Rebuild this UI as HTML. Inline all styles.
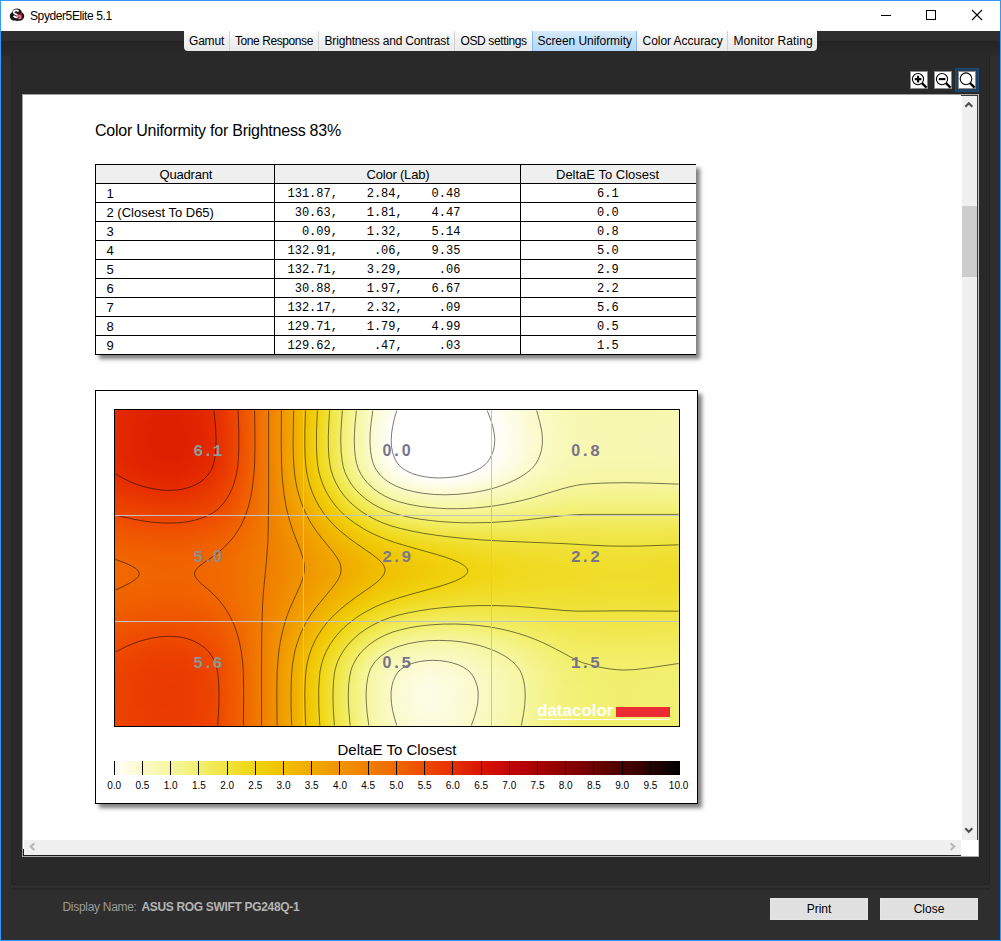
<!DOCTYPE html>
<html><head><meta charset="utf-8"><title>Spyder5Elite 5.1</title>
<style>
html,body{margin:0;padding:0}
body{width:1001px;height:941px;overflow:hidden;background:#2e2e2e;position:relative;font-family:"Liberation Sans",sans-serif;font-size:12px;color:#000}
div,span,i,svg{position:absolute;box-sizing:border-box}
.t{white-space:pre;line-height:1}
#titlebar{left:0;top:0;width:1001px;height:31px;background:#fff}
#title{left:30px;top:10px;font-size:12px;letter-spacing:-.4px}
#strip{left:1px;top:41px;width:999px;height:15px;background:linear-gradient(#252525,#2a2a2a);border-radius:4px;box-shadow:0 0 1px #1f1f1f}
#panel{left:11px;top:55px;width:979px;height:830px;background:#292929;border-left:1px solid #242424;border-right:1px solid #242424;border-bottom:1px solid #242424;border-radius:0 0 4px 4px}
#sep{left:12px;top:888px;width:978px;height:2px;background:#262626}
#tabs{left:184px;top:31px;width:633px;height:20px;background:linear-gradient(#ffffff,#f1f1f1 45%,#e9e9e9);border-radius:0 0 4px 4px;overflow:hidden}
#tabs .s{top:0;width:1px;height:20px;background:#d2d2d2}
#tabs .t{top:4px;font-size:12px}
#seltab{left:348px;top:0;width:105px;height:20px;background:linear-gradient(#d6eafc,#c2e0fb 50%,#b3d8fa);border-left:1px solid #86bdf0;border-right:1px solid #86bdf0}
.zb{top:71px;width:18px;height:18px;background:#fff;border:1px solid #8a8a8a}
#content{left:22px;top:94px;width:957px;height:763px;background:#fff}
#vs{left:962px;top:96px;width:15px;height:744px;background:#f0f0f0}
#vthumb{left:962px;top:206px;width:15px;height:71px;background:#cdcdcd}
#hs{left:24px;top:840px;width:937px;height:15px;background:#f0f0f0}
h1{position:absolute;margin:0;left:95px;top:122px;font-size:16px;font-weight:400;letter-spacing:-.24px;line-height:18px;white-space:pre}
#tbl{left:95px;top:164px;width:601px;height:191px;background:#fff;box-shadow:3.5px 4px 4px rgba(0,0,0,.5)}
#tbl .h{left:0;width:601px;height:1px;background:#000}
#tbl .v{top:0;width:1px;height:191px;background:#000}
#tbl .hd{left:0;top:1px;width:601px;height:18px;background:#efefef}
#tbl .t{font-size:13px}
#tbl .m{font-family:"Liberation Mono",monospace;font-size:12px}
#chart{left:95px;top:390px;width:603px;height:414px;background:#fff;border:1px solid #000;box-shadow:3.5px 4px 4px rgba(0,0,0,.5)}
#heat{left:114px;top:409px;width:566px;height:318px;border:1px solid #000;background:#f0c000;overflow:hidden}
#heat i{position:static;display:block;height:2px;width:564px}
#heat svg{left:0;top:0}
.lb{font-family:"Liberation Mono",monospace;font-weight:700;font-size:16px;white-space:pre;line-height:16px;width:60px;text-align:center}
.lb b{display:inline-block;width:9.6px;text-align:center;font-weight:700}
.lb .z{font-family:"Liberation Sans",sans-serif;font-size:15.5px}
#bar{left:114px;top:761px;width:566px;height:14px;background:linear-gradient(90deg,#ffffff,#fafac8,#f6f6a0,#f2ef6c,#f0e33c,#f0d410,#f0c000,#f0aa00,#f09400,#f07e00,#f06600,#ee4a00,#e62e00,#d81400,#c40400,#a80000,#8c0000,#6c0000,#4c0000,#280000,#000000)}
.tk{top:761px;width:1px;height:14px;background:#000}
.tl{top:781px;width:40px;text-align:center;font-size:10px;line-height:10px;white-space:pre}
.btn{top:898px;width:98px;height:22px;background:#e1e1e1;border:1px solid #e4e4e4;text-align:center;line-height:20px;font-size:12px}
</style></head><body>
<div id="titlebar"></div>
<svg style="left:9px;top:8px" width="16" height="14" viewBox="0 0 16 14"><path d="M3.2 4.2C3.6 1.6 6 .6 8 .6s4.4 1 4.8 3.6c1.6.7 2.6 2.3 2.4 4.2-.2 2.3-1.8 3.8-3.6 4.2-1.2.5-5.8.5-7.2 0C2.6 12.2 1 10.7.8 8.4.6 6.5 1.6 4.900 3.2 4.2z" fill="#1a1a1a"/><path d="M9.6 3.4C9 2.6 8.2 2.3 7.3 2.3c-1.5 0-2.6.8-2.6 2 0 2.6 4.4 1.6 4.4 3.6 0 .9-.8 1.4-1.8 1.4-1.1 0-2-.5-2.6-1.5" fill="none" stroke="#fff" stroke-width="1.7"/><rect x="8.6" y="5.6" width="4.6" height="5.6" rx=".8" fill="#b01020"/><text x="9.3" y="10.5" font-family="Liberation Sans" font-weight="700" font-size="5.5" fill="#e8c0c0">5</text></svg>
<span id="title" class="t">Spyder5Elite 5.1</span>
<svg style="left:875px;top:5px" width="115" height="22" viewBox="875 5 115 22" shape-rendering="crispEdges"><path d="M881 15.5h10M926.5 10.5h9v9h-9z" fill="none" stroke="#000" stroke-width="1"/><path d="M972 10l10 10M982 10l-10 10" fill="none" stroke="#000" stroke-width="1.1" shape-rendering="geometricPrecision"/></svg>
<div id="strip"></div>
<div id="panel"></div>
<div id="sep"></div>
<div id="tabs">
<div id="seltab"></div>
<div class="s" style="left:45px"></div><div class="s" style="left:134px"></div><div class="s" style="left:270px"></div><div class="s" style="left:543px"></div>
<span class="t" style="left:5px;letter-spacing:-.2px">Gamut</span>
<span class="t" style="left:51px;letter-spacing:-.42px">Tone Response</span>
<span class="t" style="left:140.5px;letter-spacing:-.17px">Brightness and Contrast</span>
<span class="t" style="left:276.5px;letter-spacing:-.38px">OSD settings</span>
<span class="t" style="left:353.5px;letter-spacing:-.06px">Screen Uniformity</span>
<span class="t" style="left:458.5px;letter-spacing:-.04px">Color Accuracy</span>
<span class="t" style="left:549.5px;letter-spacing:.08px">Monitor Rating</span>
</div>
<div class="zb" style="left:910px"></div><div class="zb" style="left:934px"></div>
<div style="left:955px;top:68px;width:24px;height:24px;background:#21405e;border:1px solid #1c4b7a"></div>
<div class="zb" style="left:958px"></div>
<svg style="left:910px;top:71px" width="66" height="18" viewBox="0 0 66 18" fill="none" stroke="#000"><circle cx="8" cy="8.1" r="5.6" stroke-width="1.1"/><path d="M12 12.1l4.5 4.5" stroke-width="2.3"/><path d="M4.8 8.1h6.6M8.1 4.8v6.6" stroke-width="2.1"/><g transform="translate(24,0)"><circle cx="8" cy="8.1" r="5.6" stroke-width="1.1"/><path d="M12 12.1l4.5 4.5" stroke-width="2.3"/><path d="M4.8 8.1h6.6" stroke-width="2.1"/></g><g transform="translate(48,0)"><circle cx="8" cy="7.7" r="5.8" stroke-width="1.1"/><path d="M12.1 12.1l4.5 4.5" stroke-width="2.3"/></g></svg>
<div id="content"></div>
<div style="left:22px;top:94px;width:957px;height:1px;background:#a0a0a0"></div>
<div style="left:22px;top:94px;width:1px;height:763px;background:#a0a0a0"></div>
<div style="left:961px;top:95px;width:17px;height:1px;background:#3c3c3c"></div><div style="left:978px;top:94px;width:1px;height:763px;background:#c4c4c4"></div>
<div style="left:977px;top:95px;width:1px;height:745px;background:#3c3c3c"></div>
<div style="left:23px;top:855px;width:938px;height:1px;background:#1c1c1c"></div><div style="left:23px;top:849px;width:1px;height:7px;background:#1c1c1c"></div>
<div style="left:22px;top:856px;width:957px;height:1px;background:#a8a8a8"></div>
<div id="vs"></div><div id="vthumb"></div><div id="hs"></div>
<svg style="left:962px;top:95px" width="15" height="745" viewBox="0 0 15 745" fill="none" stroke="#505050" stroke-width="2.1"><path d="M3.3 11.8l3.5-3.6 3.5 3.6M3.3 733.2l3.5 3.6 3.5-3.6"/></svg>
<svg style="left:23px;top:840px" width="938" height="15" viewBox="0 0 938 15" fill="none" stroke="#b9b9b9" stroke-width="2.2"><path d="M11.3 3.2l-3.6 3.4 3.6 3.4M927.7 3.2l3.6 3.4-3.6 3.4"/></svg>
<h1>Color Uniformity for Brightness 83%</h1>
<div id="tbl">
<div class="hd"></div>
<div class="h" style="top:0px"></div>
<div class="h" style="top:19px"></div>
<div class="h" style="top:38px"></div>
<div class="h" style="top:57px"></div>
<div class="h" style="top:76px"></div>
<div class="h" style="top:95px"></div>
<div class="h" style="top:114px"></div>
<div class="h" style="top:133px"></div>
<div class="h" style="top:152px"></div>
<div class="h" style="top:171px"></div>
<div class="h" style="top:190px"></div>
<div class="v" style="left:0px"></div>
<div class="v" style="left:179px"></div>
<div class="v" style="left:425px"></div>
<span class="t" style="left:64.5px;top:4px;letter-spacing:-.2px">Quadrant</span>
<span class="t" style="left:271.5px;top:4px;letter-spacing:-.2px">Color (Lab)</span>
<span class="t" style="left:461px;top:4px">DeltaE To Closest</span>
<span class="t" style="left:11.5px;top:23px">1</span>
<span class="t m" style="left:192.5px;top:24px">131.87,    2.84,    0.48</span>
<span class="t m" style="left:502px;top:24px">6.1</span>
<span class="t" style="left:11.5px;top:42px">2 (Closest To D65)</span>
<span class="t m" style="left:192.5px;top:43px"> 30.63,    1.81,    4.47</span>
<span class="t m" style="left:502px;top:43px">0.0</span>
<span class="t" style="left:11.5px;top:61px">3</span>
<span class="t m" style="left:192.5px;top:62px">  0.09,    1.32,    5.14</span>
<span class="t m" style="left:502px;top:62px">0.8</span>
<span class="t" style="left:11.5px;top:80px">4</span>
<span class="t m" style="left:192.5px;top:81px">132.91,     .06,    9.35</span>
<span class="t m" style="left:502px;top:81px">5.0</span>
<span class="t" style="left:11.5px;top:99px">5</span>
<span class="t m" style="left:192.5px;top:100px">132.71,    3.29,     .06</span>
<span class="t m" style="left:502px;top:100px">2.9</span>
<span class="t" style="left:11.5px;top:118px">6</span>
<span class="t m" style="left:192.5px;top:119px"> 30.88,    1.97,    6.67</span>
<span class="t m" style="left:502px;top:119px">2.2</span>
<span class="t" style="left:11.5px;top:137px">7</span>
<span class="t m" style="left:192.5px;top:138px">132.17,    2.32,     .09</span>
<span class="t m" style="left:502px;top:138px">5.6</span>
<span class="t" style="left:11.5px;top:156px">8</span>
<span class="t m" style="left:192.5px;top:157px">129.71,    1.79,    4.99</span>
<span class="t m" style="left:502px;top:157px">0.5</span>
<span class="t" style="left:11.5px;top:175px">9</span>
<span class="t m" style="left:192.5px;top:176px">129.62,     .47,     .03</span>
<span class="t m" style="left:502px;top:176px">1.5</span>
</div>
<div id="chart"></div>
<div id="heat">
<i style="background:linear-gradient(90deg,#e42b00,#e22700,#e12500,#e02200,#df2100,#df2100,#e02200,#e22600,#e52c00,#e83600,#ed4500,#ef5800,#f06d00,#f08200,#f09700,#f0ad00,#f0c302,#f0d616,#f0e442,#f2ef6f,#f6f59b,#f9f9bb,#fcfcda,#fefef5,#ffffff,#ffffff,#ffffff,#ffffff,#ffffff,#ffffff,#ffffff,#ffffff,#fefef3,#fdfde5,#fbfbd7,#fafaca,#f9f9c1,#f9f9b9,#f8f8b4,#f8f8b0,#f8f8af,#f7f7ae,#f7f7ae,#f7f7ae,#f7f7ae,#f7f7af,#f8f8b0,#f8f8b0)"></i>
<i style="background:linear-gradient(90deg,#e42b00,#e22700,#e12400,#e02200,#df2100,#df2100,#e02200,#e22600,#e52c00,#e83600,#ed4500,#ef5800,#f06d00,#f08200,#f09700,#f0ad00,#f0c302,#f0d616,#f0e542,#f2ef6f,#f6f59c,#f9f9bc,#fcfcda,#fefef6,#ffffff,#ffffff,#ffffff,#ffffff,#ffffff,#ffffff,#ffffff,#ffffff,#fefef3,#fdfde6,#fbfbd8,#fafacb,#f9f9c1,#f9f9ba,#f8f8b4,#f8f8b1,#f8f8b0,#f7f7af,#f7f7ae,#f7f7ae,#f7f7af,#f8f8af,#f8f8b0,#f8f8b1)"></i>
<i style="background:linear-gradient(90deg,#e42a00,#e22700,#e12400,#df2200,#df2000,#df2000,#e02200,#e22600,#e52c00,#e83600,#ed4500,#ef5800,#f06d00,#f08200,#f09700,#f0ad00,#f0c302,#f0d617,#f0e543,#f2f070,#f6f69d,#f9f9bc,#fcfcdb,#fefef7,#ffffff,#ffffff,#ffffff,#ffffff,#ffffff,#ffffff,#ffffff,#ffffff,#fefef4,#fdfde6,#fcfcd9,#fafacb,#f9f9c1,#f9f9ba,#f8f8b4,#f8f8b1,#f8f8b0,#f8f8af,#f7f7af,#f7f7af,#f8f8af,#f8f8b0,#f8f8b0,#f8f8b1)"></i>
<i style="background:linear-gradient(90deg,#e42a00,#e22700,#e12400,#df2200,#df2000,#df2000,#df2200,#e12500,#e52b00,#e83600,#ed4500,#ef5800,#f06d00,#f08200,#f09700,#f0ad00,#f0c302,#f0d617,#f0e543,#f2f071,#f6f69e,#f9f9bd,#fcfcdc,#fefef8,#ffffff,#ffffff,#ffffff,#ffffff,#ffffff,#ffffff,#ffffff,#ffffff,#fefef5,#fdfde7,#fcfcd9,#fafacc,#f9f9c2,#f9f9ba,#f8f8b5,#f8f8b1,#f8f8b0,#f8f8af,#f8f8af,#f8f8af,#f8f8af,#f8f8b0,#f8f8b1,#f8f8b1)"></i>
<i style="background:linear-gradient(90deg,#e42a00,#e22700,#e02400,#df2100,#df2000,#de2000,#df2200,#e12500,#e52b00,#e83600,#ed4500,#ef5800,#f06d00,#f08200,#f09700,#f0ad00,#f0c302,#f0d717,#f0e544,#f2f071,#f6f69e,#f9f9bd,#fcfcdd,#fefef9,#ffffff,#ffffff,#ffffff,#ffffff,#ffffff,#ffffff,#ffffff,#ffffff,#fefef6,#fdfde8,#fcfcda,#fafacc,#f9f9c2,#f9f9bb,#f8f8b5,#f8f8b2,#f8f8b1,#f8f8b0,#f8f8af,#f8f8af,#f8f8b0,#f8f8b0,#f8f8b1,#f8f8b2)"></i>
<i style="background:linear-gradient(90deg,#e42a00,#e22700,#e02400,#df2100,#de2000,#de2000,#df2200,#e12500,#e42b00,#e83600,#ed4500,#ef5800,#f06d00,#f08200,#f09700,#f0ad00,#f0c303,#f0d718,#f0e544,#f2f072,#f6f69f,#f9f9be,#fcfcde,#fffffa,#ffffff,#ffffff,#ffffff,#ffffff,#ffffff,#ffffff,#ffffff,#ffffff,#fefef6,#fdfde8,#fcfcda,#fafacd,#f9f9c3,#f9f9bb,#f8f8b5,#f8f8b2,#f8f8b1,#f8f8b0,#f8f8b0,#f8f8b0,#f8f8b0,#f8f8b1,#f8f8b1,#f8f8b2)"></i>
<i style="background:linear-gradient(90deg,#e42a00,#e22600,#e02300,#df2100,#de2000,#de2000,#df2100,#e12500,#e42b00,#e83500,#ec4500,#ef5800,#f06d00,#f08200,#f09700,#f0ad00,#f0c303,#f0d718,#f0e545,#f2f072,#f6f6a0,#f9f9bf,#fcfcdf,#fffffb,#ffffff,#ffffff,#ffffff,#ffffff,#ffffff,#ffffff,#ffffff,#ffffff,#fefef7,#fdfde9,#fcfcdb,#fafacd,#f9f9c3,#f9f9bb,#f8f8b6,#f8f8b2,#f8f8b1,#f8f8b0,#f8f8b0,#f8f8b0,#f8f8b0,#f8f8b1,#f8f8b1,#f8f8b2)"></i>
<i style="background:linear-gradient(90deg,#e42a00,#e22600,#e02300,#df2100,#de2000,#de2000,#df2100,#e12500,#e42b00,#e83500,#ec4500,#ef5800,#f06d00,#f08200,#f09700,#f0ad00,#f0c303,#f0d718,#f0e545,#f3f073,#f6f6a0,#f9f9bf,#fcfce0,#fffffb,#ffffff,#ffffff,#ffffff,#ffffff,#ffffff,#ffffff,#ffffff,#ffffff,#fefef8,#fdfdea,#fcfcdc,#fbfbce,#fafac3,#f9f9bc,#f8f8b6,#f8f8b3,#f8f8b1,#f8f8b1,#f8f8b0,#f8f8b0,#f8f8b1,#f8f8b1,#f8f8b2,#f8f8b2)"></i>
<i style="background:linear-gradient(90deg,#e42a00,#e22600,#e02300,#df2100,#de1f00,#de1f00,#df2100,#e12500,#e42b00,#e83500,#ec4400,#ef5800,#f06d00,#f08200,#f09700,#f0ad00,#f0c303,#f0d719,#f0e545,#f3f073,#f6f6a1,#f9f9bf,#fcfce0,#fffffc,#ffffff,#ffffff,#ffffff,#ffffff,#ffffff,#ffffff,#ffffff,#ffffff,#fefef8,#fdfdea,#fcfcdc,#fbfbce,#fafac4,#f9f9bc,#f8f8b6,#f8f8b3,#f8f8b2,#f8f8b1,#f8f8b1,#f8f8b1,#f8f8b1,#f8f8b1,#f8f8b2,#f8f8b3)"></i>
<i style="background:linear-gradient(90deg,#e42900,#e22600,#e02300,#df2100,#de1f00,#de1f00,#df2100,#e12500,#e42b00,#e83500,#ec4400,#ef5800,#f06d00,#f08200,#f09700,#f0ad00,#f0c403,#f0d719,#f0e546,#f3f074,#f6f6a1,#f9f9c0,#fcfce1,#fffffd,#ffffff,#ffffff,#ffffff,#ffffff,#ffffff,#ffffff,#ffffff,#ffffff,#fefef9,#fdfdeb,#fcfcdc,#fbfbcf,#fafac4,#f9f9bc,#f8f8b7,#f8f8b3,#f8f8b2,#f8f8b1,#f8f8b1,#f8f8b1,#f8f8b1,#f8f8b2,#f8f8b2,#f8f8b3)"></i>
<i style="background:linear-gradient(90deg,#e32900,#e22600,#e02300,#df2100,#de1f00,#de1f00,#df2100,#e12400,#e42a00,#e83500,#ec4400,#ef5800,#f06d00,#f08200,#f09700,#f0ad00,#f0c403,#f0d719,#f0e546,#f3f074,#f6f6a1,#f9f9c0,#fcfce1,#fffffd,#ffffff,#ffffff,#ffffff,#ffffff,#ffffff,#ffffff,#ffffff,#ffffff,#fefef9,#fdfdeb,#fcfcdd,#fbfbcf,#fafac4,#f9f9bc,#f8f8b7,#f8f8b3,#f8f8b2,#f8f8b1,#f8f8b1,#f8f8b1,#f8f8b1,#f8f8b2,#f8f8b2,#f8f8b3)"></i>
<i style="background:linear-gradient(90deg,#e32900,#e22600,#e02300,#df2000,#de1f00,#de1f00,#df2100,#e12400,#e42a00,#e83500,#ec4400,#ef5700,#f06d00,#f08200,#f09700,#f0ad00,#f0c403,#f0d719,#f0e646,#f3f074,#f6f6a1,#f9f9c1,#fcfce2,#fffffe,#ffffff,#ffffff,#ffffff,#ffffff,#ffffff,#ffffff,#ffffff,#ffffff,#fffffa,#fdfdeb,#fcfcdd,#fbfbcf,#fafac4,#f9f9bd,#f8f8b7,#f8f8b4,#f8f8b2,#f8f8b2,#f8f8b1,#f8f8b1,#f8f8b1,#f8f8b2,#f8f8b3,#f8f8b3)"></i>
<i style="background:linear-gradient(90deg,#e32900,#e22600,#e02300,#df2000,#de1f00,#de1f00,#df2100,#e12400,#e42a00,#e83500,#ec4400,#ef5700,#f06d00,#f08200,#f09700,#f0ad00,#f0c403,#f0d719,#f0e646,#f3f075,#f6f6a2,#f9f9c1,#fcfce2,#fffffe,#ffffff,#ffffff,#ffffff,#ffffff,#ffffff,#ffffff,#ffffff,#ffffff,#fffffa,#fdfdec,#fcfcdd,#fbfbd0,#fafac4,#f9f9bd,#f8f8b7,#f8f8b4,#f8f8b2,#f8f8b2,#f8f8b1,#f8f8b1,#f8f8b2,#f8f8b2,#f8f8b3,#f8f8b3)"></i>
<i style="background:linear-gradient(90deg,#e32900,#e22600,#e02300,#df2000,#de1f00,#de1f00,#df2100,#e12400,#e42a00,#e83500,#ec4400,#ef5700,#f06d00,#f08200,#f09700,#f0ad00,#f0c403,#f0d71a,#f0e647,#f3f075,#f6f6a2,#f9f9c1,#fcfce2,#fffffe,#ffffff,#ffffff,#ffffff,#ffffff,#ffffff,#ffffff,#ffffff,#ffffff,#fffffa,#fdfdec,#fcfcde,#fbfbd0,#fafac5,#f9f9bd,#f8f8b7,#f8f8b4,#f8f8b3,#f8f8b2,#f8f8b1,#f8f8b1,#f8f8b2,#f8f8b2,#f8f8b3,#f8f8b4)"></i>
<i style="background:linear-gradient(90deg,#e32900,#e22600,#e02300,#df2000,#de1f00,#de1f00,#df2100,#e12400,#e42a00,#e83500,#ec4400,#ef5700,#f06d00,#f08200,#f09700,#f0ad00,#f0c403,#f0d71a,#f0e647,#f3f075,#f6f6a2,#f9f9c1,#fcfce3,#ffffff,#ffffff,#ffffff,#ffffff,#ffffff,#ffffff,#ffffff,#ffffff,#ffffff,#fffffa,#fdfdec,#fcfcde,#fbfbd0,#fafac5,#f9f9bd,#f8f8b7,#f8f8b4,#f8f8b3,#f8f8b2,#f8f8b1,#f8f8b1,#f8f8b2,#f8f8b2,#f8f8b3,#f8f8b4)"></i>
<i style="background:linear-gradient(90deg,#e32900,#e22600,#e02300,#df2000,#de1f00,#de1f00,#df2100,#e12400,#e42a00,#e83500,#ec4400,#ef5700,#f06d00,#f08200,#f09700,#f0ad00,#f0c403,#f0d71a,#f0e647,#f3f075,#f6f6a2,#f9f9c1,#fcfce3,#ffffff,#ffffff,#ffffff,#ffffff,#ffffff,#ffffff,#ffffff,#ffffff,#ffffff,#fffffa,#fdfdec,#fcfcde,#fbfbd0,#fafac5,#f9f9bd,#f8f8b7,#f8f8b4,#f8f8b3,#f8f8b2,#f8f8b1,#f8f8b1,#f8f8b2,#f8f8b2,#f8f8b3,#f8f8b4)"></i>
<i style="background:linear-gradient(90deg,#e32900,#e22600,#e02300,#df2000,#de1f00,#de1f00,#df2100,#e12400,#e42a00,#e83500,#ec4400,#ef5700,#f06d00,#f08200,#f09700,#f0ad00,#f0c403,#f0d71a,#f0e647,#f3f075,#f6f6a2,#f9f9c1,#fcfce2,#ffffff,#ffffff,#ffffff,#ffffff,#ffffff,#ffffff,#ffffff,#ffffff,#ffffff,#fffffa,#fdfdec,#fcfcde,#fbfbd0,#fafac5,#f9f9bd,#f8f8b7,#f8f8b4,#f8f8b3,#f8f8b2,#f8f8b1,#f8f8b1,#f8f8b2,#f8f8b2,#f8f8b3,#f8f8b4)"></i>
<i style="background:linear-gradient(90deg,#e32900,#e22600,#e02300,#df2000,#de1f00,#de1f00,#df2100,#e12400,#e42a00,#e83500,#ec4400,#ef5700,#f06d00,#f08200,#f09700,#f0ad00,#f0c403,#f0d71a,#f0e646,#f3f075,#f6f6a2,#f9f9c1,#fcfce2,#fffffe,#ffffff,#ffffff,#ffffff,#ffffff,#ffffff,#ffffff,#ffffff,#ffffff,#fffffa,#fdfdec,#fcfcdd,#fbfbd0,#fafac5,#f9f9bd,#f8f8b7,#f8f8b4,#f8f8b2,#f8f8b2,#f8f8b1,#f8f8b1,#f8f8b2,#f8f8b2,#f8f8b3,#f8f8b3)"></i>
<i style="background:linear-gradient(90deg,#e32900,#e22600,#e02300,#df2000,#de1f00,#de1f00,#df2100,#e12400,#e42a00,#e83500,#ec4400,#ef5700,#f06d00,#f08200,#f09700,#f0ad00,#f0c403,#f0d719,#f0e646,#f3f074,#f6f6a2,#f9f9c1,#fcfce2,#fffffe,#ffffff,#ffffff,#ffffff,#ffffff,#ffffff,#ffffff,#ffffff,#ffffff,#fffffa,#fdfdeb,#fcfcdd,#fbfbcf,#fafac4,#f9f9bd,#f8f8b7,#f8f8b4,#f8f8b2,#f8f8b2,#f8f8b1,#f8f8b1,#f8f8b1,#f8f8b2,#f8f8b3,#f8f8b3)"></i>
<i style="background:linear-gradient(90deg,#e32900,#e22600,#e02300,#df2100,#de1f00,#de1f00,#df2100,#e12400,#e42a00,#e83500,#ec4400,#ef5800,#f06d00,#f08200,#f09700,#f0ad00,#f0c403,#f0d719,#f0e546,#f3f074,#f6f6a1,#f9f9c0,#fcfce1,#fffffd,#ffffff,#ffffff,#ffffff,#ffffff,#ffffff,#ffffff,#ffffff,#ffffff,#fefef9,#fdfdeb,#fcfcdd,#fbfbcf,#fafac4,#f9f9bc,#f8f8b7,#f8f8b3,#f8f8b2,#f8f8b1,#f8f8b1,#f8f8b1,#f8f8b1,#f8f8b2,#f8f8b2,#f8f8b3)"></i>
<i style="background:linear-gradient(90deg,#e42900,#e22600,#e02300,#df2100,#de1f00,#de1f00,#df2100,#e12500,#e42b00,#e83500,#ec4400,#ef5800,#f06d00,#f08200,#f09700,#f0ad00,#f0c403,#f0d719,#f0e546,#f3f074,#f6f6a1,#f9f9c0,#fcfce1,#fffffd,#ffffff,#ffffff,#ffffff,#ffffff,#ffffff,#ffffff,#ffffff,#ffffff,#fefef9,#fdfdeb,#fcfcdc,#fbfbcf,#fafac4,#f9f9bc,#f8f8b6,#f8f8b3,#f8f8b2,#f8f8b1,#f8f8b1,#f8f8b1,#f8f8b1,#f8f8b2,#f8f8b2,#f8f8b3)"></i>
<i style="background:linear-gradient(90deg,#e42a00,#e22600,#e02300,#df2100,#de2000,#de2000,#df2100,#e12500,#e42b00,#e83500,#ec4500,#ef5800,#f06d00,#f08200,#f09700,#f0ad00,#f0c303,#f0d719,#f0e545,#f3f073,#f6f6a0,#f9f9bf,#fcfce0,#fffffc,#ffffff,#ffffff,#ffffff,#ffffff,#ffffff,#ffffff,#ffffff,#ffffff,#fefef8,#fdfdea,#fcfcdc,#fbfbce,#fafac3,#f9f9bc,#f8f8b6,#f8f8b3,#f8f8b2,#f8f8b1,#f8f8b0,#f8f8b0,#f8f8b1,#f8f8b1,#f8f8b2,#f8f8b3)"></i>
<i style="background:linear-gradient(90deg,#e42a00,#e22600,#e02300,#df2100,#de2000,#de2000,#df2100,#e12500,#e42b00,#e83500,#ec4500,#ef5800,#f06d00,#f08200,#f09700,#f0ad00,#f0c303,#f0d718,#f0e545,#f2f072,#f6f6a0,#f9f9bf,#fcfcdf,#fffffb,#ffffff,#ffffff,#ffffff,#ffffff,#ffffff,#ffffff,#ffffff,#ffffff,#fefef7,#fdfde9,#fcfcdb,#fafacd,#f9f9c3,#f9f9bb,#f8f8b6,#f8f8b2,#f8f8b1,#f8f8b0,#f8f8b0,#f8f8b0,#f8f8b0,#f8f8b1,#f8f8b1,#f8f8b2)"></i>
<i style="background:linear-gradient(90deg,#e42a00,#e22700,#e02400,#df2100,#de2000,#de2000,#df2200,#e12500,#e52b00,#e83600,#ed4500,#ef5800,#f06d00,#f08200,#f09700,#f0ad00,#f0c302,#f0d718,#f0e544,#f2f071,#f6f69f,#f9f9be,#fcfcde,#fefef9,#ffffff,#ffffff,#ffffff,#ffffff,#ffffff,#ffffff,#ffffff,#ffffff,#fefef6,#fdfde8,#fcfcda,#fafacd,#f9f9c2,#f9f9bb,#f8f8b5,#f8f8b2,#f8f8b1,#f8f8b0,#f8f8b0,#f8f8b0,#f8f8b0,#f8f8b0,#f8f8b1,#f8f8b2)"></i>
<i style="background:linear-gradient(90deg,#e42a00,#e22700,#e12400,#df2200,#df2000,#df2000,#df2200,#e12600,#e52b00,#e83600,#ed4500,#ef5800,#f06d00,#f08200,#f09700,#f0ad00,#f0c302,#f0d617,#f0e543,#f2f070,#f6f69d,#f9f9bd,#fcfcdc,#fefef8,#ffffff,#ffffff,#ffffff,#ffffff,#ffffff,#ffffff,#ffffff,#ffffff,#fefef5,#fdfde7,#fcfcd9,#fafacc,#f9f9c2,#f9f9ba,#f8f8b5,#f8f8b1,#f8f8b0,#f8f8af,#f8f8af,#f8f8af,#f8f8af,#f8f8b0,#f8f8b0,#f8f8b1)"></i>
<i style="background:linear-gradient(90deg,#e42b00,#e22700,#e12400,#e02200,#df2100,#df2100,#e02200,#e22600,#e52c00,#e83600,#ed4500,#ef5800,#f06d00,#f08200,#f09700,#f0ad00,#f0c302,#f0d616,#f0e542,#f2ef6f,#f6f59c,#f9f9bc,#fcfcdb,#fefef6,#ffffff,#ffffff,#ffffff,#ffffff,#ffffff,#ffffff,#ffffff,#ffffff,#fefef3,#fdfde6,#fbfbd8,#fafacb,#f9f9c1,#f9f9ba,#f8f8b4,#f8f8b1,#f8f8b0,#f7f7af,#f7f7af,#f7f7af,#f7f7af,#f8f8af,#f8f8b0,#f8f8b1)"></i>
<i style="background:linear-gradient(90deg,#e42b00,#e32800,#e12500,#e02200,#df2100,#df2100,#e02300,#e22600,#e52c00,#e83700,#ed4600,#ef5800,#f06d00,#f08200,#f09700,#f0ac00,#f0c202,#f0d616,#f0e441,#f2ef6e,#f6f59b,#f9f9ba,#fcfcd9,#fefef4,#ffffff,#ffffff,#ffffff,#ffffff,#ffffff,#ffffff,#ffffff,#ffffff,#fefef2,#fdfde4,#fbfbd7,#fafac9,#f9f9c0,#f8f8b9,#f8f8b3,#f8f8b0,#f7f7af,#f7f7ae,#f7f7ae,#f7f7ae,#f7f7ae,#f7f7af,#f8f8af,#f8f8b0)"></i>
<i style="background:linear-gradient(90deg,#e52b00,#e32800,#e12500,#e02300,#df2200,#df2100,#e02300,#e22700,#e52d00,#e93700,#ed4600,#ef5900,#f06d00,#f08200,#f09700,#f0ac00,#f0c202,#f0d615,#f0e440,#f2ef6d,#f5f599,#f8f8b9,#fbfbd7,#fefef2,#ffffff,#ffffff,#ffffff,#ffffff,#ffffff,#ffffff,#ffffff,#fffffd,#fefef0,#fcfce3,#fbfbd5,#fafac8,#f9f9bf,#f8f8b8,#f8f8b2,#f8f8af,#f7f7ae,#f7f7ad,#f7f7ad,#f7f7ad,#f7f7ad,#f7f7ae,#f7f7ae,#f8f8af)"></i>
<i style="background:linear-gradient(90deg,#e52c00,#e32900,#e22600,#e02300,#e02200,#e02200,#e02400,#e22700,#e52d00,#e93700,#ed4600,#ef5900,#f06d00,#f08200,#f09600,#f0ac00,#f0c201,#f0d514,#f0e43f,#f2ef6b,#f5f597,#f8f8b7,#fbfbd4,#fefeef,#ffffff,#ffffff,#ffffff,#ffffff,#ffffff,#ffffff,#ffffff,#fffffa,#fdfdee,#fcfce1,#fbfbd3,#fafac7,#f9f9be,#f8f8b7,#f8f8b1,#f7f7ae,#f7f7ad,#f7f7ac,#f7f7ac,#f7f7ac,#f7f7ac,#f7f7ad,#f7f7ad,#f7f7ae)"></i>
<i style="background:linear-gradient(90deg,#e52c00,#e32900,#e22600,#e12400,#e02300,#e02300,#e12400,#e32800,#e62e00,#e93800,#ed4700,#ef5900,#f06e00,#f08200,#f09600,#f0ac00,#f0c101,#f0d512,#f0e33d,#f2ee69,#f5f494,#f8f8b5,#fbfbd1,#fdfdec,#fffffe,#ffffff,#ffffff,#ffffff,#ffffff,#ffffff,#ffffff,#fefef8,#fdfdeb,#fcfcde,#fbfbd1,#fafac5,#f9f9bd,#f8f8b6,#f8f8b0,#f7f7ad,#f7f7ac,#f7f7ab,#f7f7ab,#f7f7ab,#f7f7ab,#f7f7ac,#f7f7ac,#f7f7ad)"></i>
<i style="background:linear-gradient(90deg,#e62d00,#e42a00,#e22700,#e12500,#e02300,#e02300,#e12500,#e32800,#e62e00,#e93900,#ed4700,#ef5a00,#f06e00,#f08200,#f09600,#f0ab00,#f0c101,#f0d411,#f0e33b,#f2ee67,#f5f492,#f8f8b3,#fafacd,#fdfde8,#fffffb,#ffffff,#ffffff,#ffffff,#ffffff,#ffffff,#ffffff,#fefef4,#fdfde8,#fcfcdc,#fbfbce,#fafac4,#f9f9bb,#f8f8b4,#f7f7af,#f7f7ac,#f7f7ab,#f7f7aa,#f7f7aa,#f7f7aa,#f7f7aa,#f7f7aa,#f7f7ab,#f7f7ac)"></i>
<i style="background:linear-gradient(90deg,#e62e00,#e42b00,#e32800,#e12600,#e12400,#e12400,#e22600,#e32900,#e62f00,#e93900,#ed4800,#ef5a00,#f06e00,#f08200,#f09600,#f0ab00,#f0c000,#f0d410,#f0e239,#f2ed64,#f5f48e,#f8f8b0,#fafac9,#fdfde4,#fefef6,#ffffff,#ffffff,#ffffff,#ffffff,#ffffff,#fffffb,#fefef1,#fdfde5,#fcfcd9,#fafacc,#f9f9c2,#f9f9b9,#f8f8b3,#f7f7ad,#f7f7aa,#f7f7a9,#f7f7a9,#f7f7a8,#f7f7a8,#f7f7a9,#f7f7a9,#f7f7aa,#f7f7aa)"></i>
<i style="background:linear-gradient(90deg,#e62f00,#e52b00,#e32900,#e22600,#e12500,#e12500,#e22700,#e42a00,#e73000,#e93a00,#ee4800,#ef5a00,#f06e00,#f08200,#f09600,#f0aa00,#f0c000,#f0d30f,#f0e137,#f2ec61,#f4f38b,#f7f7ad,#fafac6,#fcfcdf,#fefef2,#fffffe,#ffffff,#ffffff,#ffffff,#ffffff,#fefef7,#fdfded,#fcfce2,#fbfbd5,#fafac9,#f9f9c0,#f8f8b8,#f8f8b1,#f7f7ac,#f7f7a9,#f7f7a8,#f7f7a7,#f7f7a7,#f7f7a7,#f7f7a7,#f7f7a8,#f7f7a8,#f7f7a9)"></i>
<i style="background:linear-gradient(90deg,#e63000,#e52c00,#e42a00,#e22700,#e22600,#e22600,#e32800,#e42b00,#e73100,#ea3b00,#ee4900,#ef5b00,#f06e00,#f08200,#f09500,#f0aa00,#f0bf00,#f0d20e,#f0e035,#f1ec5e,#f4f387,#f7f7aa,#f9f9c2,#fcfcdb,#fdfded,#fefef9,#ffffff,#ffffff,#ffffff,#fffffb,#fefef3,#fdfde9,#fcfcde,#fbfbd2,#fafac6,#f9f9bd,#f8f8b6,#f7f7af,#f7f7aa,#f7f7a7,#f7f7a6,#f7f7a6,#f7f7a5,#f7f7a5,#f7f7a6,#f7f7a6,#f7f7a6,#f7f7a7)"></i>
<i style="background:linear-gradient(90deg,#e73100,#e62d00,#e42b00,#e32800,#e22700,#e22700,#e32900,#e52c00,#e73200,#ea3c00,#ee4a00,#ef5b00,#f06e00,#f08200,#f09500,#f0a900,#f0be00,#f0d10e,#f0e032,#f1eb5b,#f4f283,#f7f7a7,#f9f9bf,#fbfbd5,#fdfde7,#fefef3,#fffffa,#fffffc,#fffffb,#fefef6,#fdfdee,#fdfde5,#fcfcda,#fbfbce,#fafac3,#f9f9bb,#f8f8b3,#f7f7ad,#f7f7a8,#f7f7a5,#f6f6a4,#f6f6a4,#f6f6a4,#f6f6a4,#f6f6a4,#f6f6a4,#f6f6a5,#f7f7a5)"></i>
<i style="background:linear-gradient(90deg,#e73200,#e62e00,#e52c00,#e42900,#e32800,#e32800,#e42a00,#e52d00,#e73300,#ea3d00,#ee4a00,#ef5c00,#f06f00,#f08200,#f09500,#f0a900,#f0bd00,#f0d00d,#f0df2f,#f1ea57,#f3f27f,#f6f6a3,#f9f9bb,#fbfbd0,#fcfce1,#fdfded,#fefef4,#fefef7,#fefef5,#fefef0,#fdfde9,#fcfce0,#fbfbd5,#fafaca,#f9f9c1,#f8f8b9,#f8f8b1,#f7f7ab,#f7f7a6,#f6f6a3,#f6f6a2,#f6f6a2,#f6f6a2,#f6f6a2,#f6f6a2,#f6f6a2,#f6f6a3,#f6f6a3)"></i>
<i style="background:linear-gradient(90deg,#e73300,#e63000,#e52d00,#e42b00,#e42900,#e42900,#e42b00,#e62e00,#e83400,#ea3e00,#ee4b00,#ef5c00,#f06f00,#f08200,#f09500,#f0a800,#f0bc00,#f0cf0c,#f0de2c,#f1e954,#f3f17b,#f6f69f,#f8f8b7,#fafaca,#fcfcdb,#fdfde7,#fdfdee,#fefef1,#fefeef,#fdfdeb,#fdfde4,#fcfcdb,#fbfbd1,#fafac6,#f9f9be,#f8f8b6,#f7f7af,#f7f7a9,#f6f6a4,#f6f6a1,#f6f6a0,#f6f6a0,#f6f6a0,#f6f6a0,#f6f6a0,#f6f6a0,#f6f6a1,#f6f6a1)"></i>
<i style="background:linear-gradient(90deg,#e83400,#e73100,#e62e00,#e52c00,#e42b00,#e42b00,#e52c00,#e62f00,#e83500,#eb3f00,#ee4c00,#ef5d00,#f06f00,#f08200,#f09400,#f0a800,#f0bc00,#f0ce0b,#f0dd29,#f1e850,#f3f076,#f6f59a,#f8f8b2,#fafac5,#fbfbd5,#fcfce1,#fdfde8,#fdfdea,#fdfde9,#fdfde5,#fcfcde,#fbfbd6,#fafacc,#f9f9c3,#f9f9bb,#f8f8b3,#f7f7ac,#f7f7a6,#f6f6a2,#f6f69f,#f6f69e,#f6f69d,#f6f69d,#f6f69d,#f6f69d,#f6f69e,#f6f69e,#f6f69f)"></i>
<i style="background:linear-gradient(90deg,#e83500,#e73200,#e62f00,#e62d00,#e52c00,#e52c00,#e62d00,#e73100,#e83600,#eb4000,#ee4d00,#ef5d00,#f06f00,#f08200,#f09400,#f0a700,#f0bb00,#f0cd0a,#f0dc26,#f1e74c,#f2f071,#f5f494,#f7f7ae,#f9f9c0,#fbfbce,#fcfcda,#fcfce1,#fdfde4,#fcfce3,#fcfcdf,#fbfbd8,#fbfbd0,#fafac7,#f9f9bf,#f8f8b8,#f8f8b0,#f7f7a9,#f6f6a4,#f6f69f,#f6f59c,#f6f59b,#f6f59a,#f6f59a,#f6f59a,#f6f59a,#f6f59b,#f6f59b,#f6f59c)"></i>
<i style="background:linear-gradient(90deg,#e83600,#e83300,#e73100,#e62e00,#e62d00,#e62d00,#e62f00,#e73200,#e93800,#eb4100,#ee4e00,#ef5e00,#f07000,#f08100,#f09300,#f0a600,#f0ba00,#f0cc09,#f0db23,#f0e648,#f2ef6c,#f5f48e,#f7f7a9,#f9f9bb,#fafac7,#fbfbd3,#fcfcda,#fcfcdd,#fcfcdc,#fbfbd8,#fbfbd2,#fafacb,#fafac3,#f9f9bc,#f8f8b4,#f7f7ad,#f7f7a7,#f6f6a1,#f6f59c,#f5f599,#f5f598,#f5f597,#f5f597,#f5f597,#f5f597,#f5f598,#f5f598,#f5f599)"></i>
<i style="background:linear-gradient(90deg,#e93800,#e83500,#e73200,#e73000,#e62f00,#e62f00,#e73000,#e83300,#e93900,#ec4200,#ee4f00,#ef5f00,#f07000,#f08100,#f09300,#f0a600,#f0b900,#f0ca08,#f0d920,#f0e543,#f2ee67,#f4f389,#f6f6a4,#f8f8b6,#f9f9c2,#fafacc,#fbfbd3,#fbfbd6,#fbfbd5,#fbfbd2,#fafacc,#fafac6,#f9f9bf,#f8f8b8,#f8f8b1,#f7f7aa,#f6f6a4,#f6f69e,#f5f599,#f5f596,#f5f595,#f5f494,#f5f494,#f5f494,#f5f494,#f5f495,#f5f595,#f5f596)"></i>
<i style="background:linear-gradient(90deg,#e93900,#e83600,#e83400,#e73100,#e73000,#e73000,#e73200,#e83500,#ea3a00,#ec4300,#ee5000,#f05f00,#f07000,#f08100,#f09300,#f0a500,#f0b700,#f0c907,#f0d81c,#f0e43f,#f2ec62,#f4f282,#f6f69f,#f8f8b1,#f9f9bd,#fafac5,#fafacb,#fbfbce,#fbfbce,#fafacb,#fafac6,#f9f9c1,#f9f9bb,#f8f8b4,#f7f7ad,#f7f7a7,#f6f6a1,#f6f59a,#f5f595,#f5f493,#f5f492,#f5f491,#f5f491,#f5f491,#f5f491,#f5f492,#f5f492,#f5f492)"></i>
<i style="background:linear-gradient(90deg,#ea3b00,#e93800,#e83500,#e73300,#e73200,#e73200,#e73300,#e83600,#ea3c00,#ec4400,#ee5100,#f06000,#f07000,#f08100,#f09200,#f0a400,#f0b600,#f0c806,#f0d719,#f0e23b,#f1eb5d,#f3f17c,#f5f598,#f7f7ab,#f8f8b7,#f9f9bf,#fafac5,#fafac7,#fafac7,#fafac5,#f9f9c2,#f9f9bd,#f8f8b7,#f8f8b0,#f7f7aa,#f6f6a3,#f6f69d,#f5f597,#f5f492,#f5f48f,#f5f48f,#f5f48e,#f5f48e,#f5f48e,#f5f48e,#f5f48e,#f5f48f,#f5f48f)"></i>
<i style="background:linear-gradient(90deg,#ea3c00,#e93900,#e83700,#e83500,#e83300,#e83300,#e83500,#e93800,#ea3d00,#ed4600,#ef5200,#f06100,#f07100,#f08100,#f09200,#f0a300,#f0b500,#f0c605,#f0d615,#f0e136,#f1ea57,#f3f076,#f5f491,#f7f7a6,#f8f8b1,#f9f9ba,#f9f9bf,#f9f9c1,#f9f9c2,#f9f9c0,#f9f9bd,#f8f8b8,#f8f8b2,#f7f7ac,#f7f7a6,#f6f6a0,#f5f599,#f5f493,#f5f48e,#f4f38c,#f4f38b,#f4f38b,#f4f38b,#f4f38b,#f4f38b,#f4f38b,#f4f38b,#f4f38c)"></i>
<i style="background:linear-gradient(90deg,#ea3e00,#ea3b00,#e93800,#e83600,#e83500,#e83500,#e83600,#e93900,#eb3f00,#ed4700,#ef5300,#f06100,#f07100,#f08100,#f09200,#f0a300,#f0b400,#f0c504,#f0d411,#f0e032,#f1e852,#f2ef6f,#f4f38a,#f6f6a0,#f7f7ac,#f8f8b4,#f9f9b9,#f9f9bc,#f9f9bc,#f9f9bb,#f8f8b8,#f8f8b3,#f7f7ae,#f7f7a8,#f6f6a2,#f6f59c,#f5f495,#f5f48f,#f4f38b,#f4f388,#f4f388,#f4f387,#f4f387,#f4f387,#f4f387,#f4f388,#f4f388,#f4f388)"></i>
<i style="background:linear-gradient(90deg,#eb3f00,#ea3c00,#e93a00,#e93800,#e83700,#e83700,#e93800,#ea3b00,#eb4000,#ed4800,#ef5400,#f06200,#f07100,#f08100,#f09100,#f0a200,#f0b300,#f0c403,#f0d30f,#f0de2d,#f1e74c,#f2ee69,#f4f283,#f5f598,#f7f7a6,#f7f7ae,#f8f8b3,#f8f8b6,#f8f8b6,#f8f8b5,#f8f8b2,#f7f7ae,#f7f7a9,#f6f6a4,#f6f69e,#f5f597,#f5f490,#f4f38b,#f4f387,#f4f285,#f4f284,#f4f284,#f4f284,#f4f284,#f4f284,#f4f284,#f4f284,#f4f285)"></i>
<i style="background:linear-gradient(90deg,#eb4100,#eb3e00,#ea3b00,#e93a00,#e93800,#e93800,#e93a00,#ea3d00,#ec4200,#ee4900,#ef5500,#f06300,#f07200,#f08100,#f09100,#f0a100,#f0b200,#f0c202,#f0d10e,#f0dc29,#f0e647,#f2ed63,#f3f17c,#f5f491,#f6f6a0,#f7f7a8,#f7f7ad,#f8f8b0,#f8f8b1,#f8f8b0,#f7f7ad,#f7f7a9,#f6f6a5,#f6f6a0,#f5f599,#f5f492,#f4f38c,#f4f387,#f4f283,#f4f281,#f4f281,#f4f281,#f4f280,#f4f280,#f4f280,#f4f281,#f4f281,#f4f281)"></i>
<i style="background:linear-gradient(90deg,#ec4200,#eb3f00,#ea3d00,#ea3b00,#e93a00,#e93a00,#ea3b00,#eb3e00,#ec4300,#ee4b00,#ef5600,#f06400,#f07200,#f08100,#f09000,#f0a000,#f0b100,#f0c101,#f0cf0c,#f0db24,#f0e441,#f1eb5d,#f3f075,#f4f389,#f5f598,#f6f6a2,#f7f7a7,#f7f7aa,#f7f7ab,#f7f7aa,#f7f7a8,#f6f6a4,#f6f6a0,#f6f59a,#f5f494,#f5f48d,#f4f388,#f4f283,#f3f27f,#f3f17e,#f3f17d,#f3f17d,#f3f17d,#f3f17d,#f3f17d,#f3f17d,#f3f17d,#f3f17d)"></i>
<i style="background:linear-gradient(90deg,#ec4400,#eb4100,#eb3f00,#ea3d00,#ea3c00,#ea3c00,#ea3d00,#eb4000,#ec4500,#ee4c00,#ef5700,#f06400,#f07200,#f08100,#f09000,#f09f00,#f0af00,#f0bf00,#f0ce0b,#f0d920,#f0e33b,#f1ea56,#f2ef6d,#f4f281,#f5f490,#f6f59a,#f6f6a1,#f6f6a4,#f7f7a5,#f6f6a5,#f6f6a3,#f6f69f,#f6f59a,#f5f495,#f5f48f,#f4f389,#f4f283,#f3f27f,#f3f17c,#f3f17a,#f3f17a,#f3f179,#f3f179,#f3f179,#f3f179,#f3f179,#f3f17a,#f3f17a)"></i>
<i style="background:linear-gradient(90deg,#ed4500,#ec4300,#eb4000,#eb3f00,#ea3e00,#ea3e00,#eb3f00,#ec4200,#ed4600,#ee4e00,#ef5800,#f06500,#f07200,#f08100,#f08f00,#f09f00,#f0ae00,#f0be00,#f0cc09,#f0d81b,#f0e136,#f1e850,#f2ee66,#f3f17a,#f4f388,#f5f492,#f5f599,#f6f69d,#f6f69f,#f6f69f,#f6f69c,#f5f599,#f5f494,#f5f48f,#f4f389,#f4f284,#f3f27f,#f3f17b,#f3f178,#f3f076,#f3f076,#f3f076,#f3f076,#f3f076,#f3f076,#f3f076,#f3f076,#f3f076)"></i>
<i style="background:linear-gradient(90deg,#ed4700,#ec4400,#ec4200,#eb4000,#eb3f00,#eb3f00,#eb4100,#ec4300,#ed4800,#ee4f00,#ef5900,#f06600,#f07300,#f08100,#f08f00,#f09e00,#f0ad00,#f0bc00,#f0ca08,#f0d616,#f0df31,#f1e649,#f1ec5f,#f2f072,#f4f280,#f4f38a,#f5f491,#f5f595,#f5f597,#f5f597,#f5f595,#f5f492,#f5f48e,#f4f389,#f4f284,#f3f27f,#f3f17a,#f3f076,#f3f074,#f2f072,#f2f072,#f2f072,#f2f072,#f2f072,#f2f072,#f2f072,#f2f072,#f2f072)"></i>
<i style="background:linear-gradient(90deg,#ee4800,#ed4600,#ec4400,#ec4200,#eb4100,#eb4100,#ec4200,#ed4500,#ee4900,#ee5000,#ef5a00,#f06700,#f07300,#f08100,#f08f00,#f09d00,#f0ac00,#f0bb00,#f0c807,#f0d512,#f0dd2b,#f0e543,#f1ea59,#f2ee6a,#f3f178,#f4f282,#f4f389,#f5f38d,#f5f490,#f5f490,#f5f48e,#f4f38c,#f4f388,#f4f283,#f3f27f,#f3f17a,#f3f076,#f2f072,#f2f070,#f2ef6f,#f2ef6f,#f2ef6f,#f2ef6f,#f2ef6f,#f2ef6f,#f2ef6f,#f2ef6f,#f2ef6f)"></i>
<i style="background:linear-gradient(90deg,#ee4a00,#ed4800,#ed4600,#ec4400,#ec4300,#ec4300,#ec4400,#ed4700,#ee4b00,#ef5200,#ef5b00,#f06700,#f07300,#f08100,#f08e00,#f09c00,#f0ab00,#f0b900,#f0c605,#f0d30f,#f0db26,#f0e33d,#f1e852,#f2ed63,#f2ef6f,#f3f179,#f4f281,#f4f285,#f4f388,#f4f388,#f4f387,#f4f285,#f4f282,#f3f17e,#f3f179,#f3f075,#f2f071,#f2ef6e,#f2ef6c,#f2ef6b,#f2ef6b,#f2ef6b,#f2ef6b,#f2ef6b,#f2ef6b,#f2ef6b,#f2ef6b,#f2ef6b)"></i>
<i style="background:linear-gradient(90deg,#ee4c00,#ee4900,#ed4700,#ed4600,#ed4500,#ec4500,#ed4600,#ee4800,#ee4c00,#ef5300,#ef5c00,#f06800,#f07400,#f08100,#f08e00,#f09b00,#f0a900,#f0b700,#f0c504,#f0d00d,#f0da21,#f0e137,#f1e74b,#f1eb5b,#f2ee68,#f2f071,#f3f179,#f3f17d,#f4f280,#f4f281,#f4f280,#f3f17e,#f3f17b,#f3f178,#f3f074,#f2f070,#f2ef6d,#f2ef6a,#f2ee68,#f2ee67,#f2ee68,#f2ee68,#f2ee68,#f2ee68,#f2ee68,#f2ee68,#f2ee68,#f2ee67)"></i>
<i style="background:linear-gradient(90deg,#ee4d00,#ee4b00,#ee4900,#ed4700,#ed4700,#ed4700,#ed4800,#ee4a00,#ee4e00,#ef5400,#ef5e00,#f06900,#f07400,#f08100,#f08d00,#f09b00,#f0a800,#f0b600,#f0c302,#f0ce0b,#f0d81b,#f0df31,#f0e544,#f1e954,#f2ec60,#f2ee69,#f2f071,#f3f076,#f3f178,#f3f17a,#f3f179,#f3f178,#f3f075,#f2f072,#f2ef6f,#f2ef6c,#f2ee69,#f2ee66,#f2ed65,#f2ed64,#f2ed64,#f2ed64,#f2ed64,#f2ed64,#f2ed64,#f2ed64,#f2ed64,#f2ed64)"></i>
<i style="background:linear-gradient(90deg,#ee4f00,#ee4d00,#ee4b00,#ee4900,#ee4800,#ee4800,#ee4900,#ee4c00,#ee4f00,#ef5600,#ef5f00,#f06900,#f07400,#f08100,#f08d00,#f09a00,#f0a700,#f0b400,#f0c101,#f0cc0a,#f0d616,#f0dd2b,#f0e33d,#f1e74d,#f1ea59,#f2ed62,#f2ee69,#f2ef6e,#f2f071,#f2f072,#f2f072,#f2f071,#f2ef6f,#f2ef6d,#f2ee6a,#f2ee67,#f2ed65,#f2ed62,#f2ec61,#f2ec61,#f2ec61,#f2ec61,#f2ec61,#f2ec61,#f2ec61,#f2ec61,#f2ec61,#f2ec61)"></i>
<i style="background:linear-gradient(90deg,#ee5000,#ee4e00,#ee4c00,#ee4b00,#ee4a00,#ee4a00,#ee4b00,#ee4d00,#ef5100,#ef5700,#f06000,#f06a00,#f07500,#f08100,#f08c00,#f09900,#f0a600,#f0b300,#f0bf00,#f0ca08,#f0d411,#f0db25,#f0e137,#f0e646,#f1e852,#f1eb5b,#f2ec62,#f2ee66,#f2ee69,#f2ef6b,#f2ef6b,#f2ef6b,#f2ee69,#f2ee67,#f2ed65,#f2ed63,#f2ec61,#f1ec5f,#f1eb5d,#f1eb5d,#f1eb5d,#f1eb5e,#f1eb5e,#f1eb5e,#f1eb5e,#f1eb5e,#f1eb5d,#f1eb5d)"></i>
<i style="background:linear-gradient(90deg,#ef5200,#ee5000,#ee4e00,#ee4d00,#ee4c00,#ee4c00,#ee4d00,#ee4f00,#ef5300,#ef5800,#f06100,#f06b00,#f07500,#f08000,#f08c00,#f09800,#f0a500,#f0b100,#f0bd00,#f0c807,#f0d20e,#f0d920,#f0df31,#f0e43f,#f1e74b,#f1e953,#f1eb5a,#f1ec5f,#f2ed63,#f2ed65,#f2ed65,#f2ed65,#f2ed64,#f2ed62,#f2ec60,#f1ec5e,#f1eb5c,#f1eb5b,#f1ea5a,#f1ea5a,#f1eb5a,#f1eb5a,#f1eb5a,#f1eb5a,#f1eb5a,#f1eb5a,#f1eb5a,#f1ea5a)"></i>
<i style="background:linear-gradient(90deg,#ef5300,#ef5100,#ee5000,#ee4e00,#ee4d00,#ee4d00,#ee4e00,#ee5100,#ef5400,#ef5a00,#f06200,#f06b00,#f07500,#f08000,#f08c00,#f09700,#f0a300,#f0b000,#f0bb00,#f0c605,#f0d00d,#f0d71a,#f0dd2b,#f0e238,#f0e543,#f1e74c,#f1e953,#f1ea58,#f1eb5c,#f1ec5e,#f1ec5f,#f1ec5f,#f1ec5e,#f1eb5d,#f1eb5c,#f1eb5a,#f1ea59,#f1ea57,#f1ea56,#f1ea56,#f1ea57,#f1ea57,#f1ea57,#f1ea57,#f1ea57,#f1ea57,#f1ea57,#f1ea56)"></i>
<i style="background:linear-gradient(90deg,#ef5500,#ef5300,#ef5100,#ee5000,#ee4f00,#ee4f00,#ee5000,#ef5200,#ef5600,#ef5b00,#f06300,#f06c00,#f07600,#f08000,#f08b00,#f09700,#f0a200,#f0ae00,#f0ba00,#f0c403,#f0ce0b,#f0d615,#f0db25,#f0e032,#f0e33d,#f0e545,#f1e74c,#f1e851,#f1e955,#f1ea58,#f1ea59,#f1ea59,#f1ea59,#f1ea58,#f1ea57,#f1e956,#f1e955,#f1e954,#f1e953,#f1e953,#f1e954,#f1e954,#f1e954,#f1e954,#f1e954,#f1e954,#f1e954,#f1e953)"></i>
<i style="background:linear-gradient(90deg,#ef5600,#ef5400,#ef5300,#ef5100,#ee5100,#ee5100,#ef5200,#ef5400,#ef5700,#ef5c00,#f06400,#f06c00,#f07600,#f08000,#f08b00,#f09600,#f0a100,#f0ad00,#f0b800,#f0c202,#f0cb09,#f0d410,#f0d91f,#f0de2c,#f0e136,#f0e43e,#f0e545,#f1e74b,#f1e84f,#f1e851,#f1e953,#f1e954,#f1e954,#f1e953,#f1e953,#f1e852,#f1e851,#f1e850,#f1e850,#f1e850,#f1e850,#f1e851,#f1e851,#f1e851,#f1e851,#f1e851,#f1e850,#f1e850)"></i>
<i style="background:linear-gradient(90deg,#ef5800,#ef5600,#ef5400,#ef5300,#ef5200,#ef5200,#ef5300,#ef5500,#ef5800,#ef5e00,#f06500,#f06d00,#f07600,#f08000,#f08b00,#f09500,#f0a000,#f0ab00,#f0b600,#f0c000,#f0c907,#f0d10e,#f0d71a,#f0dc26,#f0df30,#f0e238,#f0e43f,#f0e544,#f1e648,#f1e74b,#f1e74d,#f1e84e,#f1e84f,#f1e84f,#f1e84e,#f1e74e,#f1e74d,#f1e74d,#f1e74c,#f1e74d,#f1e74d,#f1e74e,#f1e74e,#f1e74e,#f1e74e,#f1e74e,#f1e74d,#f1e74d)"></i>
<i style="background:linear-gradient(90deg,#ef5900,#ef5700,#ef5600,#ef5500,#ef5400,#ef5400,#ef5500,#ef5700,#ef5a00,#ef5f00,#f06600,#f06e00,#f07700,#f08000,#f08a00,#f09500,#f09f00,#f0aa00,#f0b400,#f0be00,#f0c706,#f0cf0c,#f0d514,#f0da21,#f0dd2a,#f0e032,#f0e239,#f0e33e,#f0e542,#f0e545,#f0e648,#f1e649,#f1e64a,#f1e74a,#f1e74a,#f1e64a,#f1e649,#f1e649,#f1e649,#f1e64a,#f1e74a,#f1e74b,#f1e74b,#f1e74b,#f1e74b,#f1e74b,#f1e74a,#f1e64a)"></i>
<i style="background:linear-gradient(90deg,#ef5b00,#ef5900,#ef5700,#ef5600,#ef5500,#ef5500,#ef5600,#ef5800,#ef5b00,#f06000,#f06700,#f06e00,#f07700,#f08000,#f08a00,#f09400,#f09e00,#f0a800,#f0b300,#f0bc00,#f0c504,#f0cd0a,#f0d310,#f0d81b,#f0db25,#f0de2c,#f0e033,#f0e238,#f0e33c,#f0e440,#f0e542,#f0e544,#f0e545,#f0e546,#f0e546,#f0e546,#f0e546,#f0e546,#f0e646,#f0e647,#f0e647,#f0e648,#f1e648,#f1e648,#f0e648,#f0e648,#f0e647,#f0e647)"></i>
<i style="background:linear-gradient(90deg,#ef5c00,#ef5a00,#ef5900,#ef5800,#ef5700,#ef5700,#ef5800,#ef5900,#ef5c00,#f06100,#f06800,#f06f00,#f07700,#f08000,#f08a00,#f09300,#f09d00,#f0a700,#f0b100,#f0bb00,#f0c303,#f0cb09,#f0d10e,#f0d616,#f0d91f,#f0dc27,#f0de2d,#f0e033,#f0e137,#f0e23a,#f0e33d,#f0e43f,#f0e440,#f0e441,#f0e442,#f0e542,#f0e542,#f0e543,#f0e543,#f0e544,#f0e545,#f0e545,#f0e545,#f0e545,#f0e545,#f0e545,#f0e544,#f0e544)"></i>
<i style="background:linear-gradient(90deg,#ef5d00,#ef5c00,#ef5a00,#ef5900,#ef5800,#ef5800,#ef5900,#ef5b00,#ef5e00,#f06200,#f06800,#f06f00,#f07700,#f08000,#f08900,#f09300,#f09c00,#f0a600,#f0b000,#f0b900,#f0c101,#f0c907,#f0cf0c,#f0d411,#f0d71a,#f0da22,#f0dc28,#f0de2d,#f0e032,#f0e135,#f0e238,#f0e23a,#f0e33c,#f0e33d,#f0e33e,#f0e43f,#f0e43f,#f0e440,#f0e440,#f0e441,#f0e442,#f0e542,#f0e543,#f0e543,#f0e542,#f0e542,#f0e442,#f0e441)"></i>
<i style="background:linear-gradient(90deg,#ef5e00,#ef5d00,#ef5b00,#ef5a00,#ef5a00,#ef5a00,#ef5a00,#ef5c00,#ef5f00,#f06300,#f06900,#f07000,#f07800,#f08000,#f08900,#f09200,#f09b00,#f0a500,#f0ae00,#f0b700,#f0c000,#f0c705,#f0cd0a,#f0d20e,#f0d615,#f0d81c,#f0da23,#f0dc28,#f0de2d,#f0df31,#f0e034,#f0e136,#f0e238,#f0e239,#f0e23a,#f0e33b,#f0e33c,#f0e33d,#f0e33d,#f0e43e,#f0e43f,#f0e440,#f0e440,#f0e440,#f0e440,#f0e43f,#f0e43f,#f0e43e)"></i>
<i style="background:linear-gradient(90deg,#f06000,#ef5e00,#ef5d00,#ef5c00,#ef5b00,#ef5b00,#ef5c00,#ef5d00,#f06000,#f06400,#f06a00,#f07000,#f07800,#f08000,#f08900,#f09100,#f09b00,#f0a400,#f0ad00,#f0b500,#f0be00,#f0c504,#f0cb09,#f0d00d,#f0d410,#f0d718,#f0d91e,#f0db24,#f0dc28,#f0de2c,#f0df30,#f0e032,#f0e034,#f0e136,#f0e137,#f0e238,#f0e239,#f0e23a,#f0e33b,#f0e33c,#f0e33d,#f0e33d,#f0e33d,#f0e33d,#f0e33d,#f0e33d,#f0e33c,#f0e33c)"></i>
<i style="background:linear-gradient(90deg,#f06100,#f05f00,#ef5e00,#ef5d00,#ef5c00,#ef5c00,#ef5d00,#ef5f00,#f06100,#f06500,#f06b00,#f07100,#f07800,#f08000,#f08800,#f09100,#f09a00,#f0a300,#f0ab00,#f0b400,#f0bc00,#f0c302,#f0c907,#f0ce0b,#f0d20e,#f0d513,#f0d71a,#f0d91f,#f0db24,#f0dc28,#f0dd2c,#f0de2e,#f0df31,#f0e033,#f0e034,#f0e135,#f0e136,#f0e137,#f0e238,#f0e239,#f0e23a,#f0e33b,#f0e33b,#f0e33b,#f0e33b,#f0e33b,#f0e23a,#f0e23a)"></i>
<i style="background:linear-gradient(90deg,#f06200,#f06000,#ef5f00,#ef5e00,#ef5d00,#ef5d00,#ef5e00,#f06000,#f06200,#f06600,#f06b00,#f07100,#f07800,#f08000,#f08800,#f09100,#f09900,#f0a200,#f0aa00,#f0b300,#f0ba00,#f0c101,#f0c706,#f0cc0a,#f0d00d,#f0d310,#f0d615,#f0d81b,#f0d920,#f0db24,#f0dc28,#f0dd2b,#f0de2d,#f0df2f,#f0df31,#f0e033,#f0e034,#f0e135,#f0e136,#f0e137,#f0e238,#f0e239,#f0e239,#f0e239,#f0e239,#f0e238,#f0e238,#f0e137)"></i>
<i style="background:linear-gradient(90deg,#f06300,#f06100,#f06000,#f05f00,#ef5e00,#ef5e00,#f05f00,#f06100,#f06300,#f06700,#f06c00,#f07200,#f07900,#f08000,#f08800,#f09000,#f09800,#f0a100,#f0a900,#f0b100,#f0b900,#f0c000,#f0c604,#f0ca08,#f0ce0b,#f0d20e,#f0d411,#f0d617,#f0d81c,#f0da21,#f0db24,#f0dc28,#f0dd2a,#f0de2d,#f0de2f,#f0df30,#f0df32,#f0e033,#f0e034,#f0e135,#f0e136,#f0e137,#f0e137,#f0e137,#f0e137,#f0e136,#f0e136,#f0e135)"></i>
<i style="background:linear-gradient(90deg,#f06400,#f06200,#f06100,#f06000,#f06000,#f06000,#f06000,#f06200,#f06400,#f06800,#f06c00,#f07200,#f07900,#f08000,#f08800,#f09000,#f09800,#f0a000,#f0a800,#f0b000,#f0b700,#f0be00,#f0c403,#f0c907,#f0cd0a,#f0d00d,#f0d30f,#f0d514,#f0d719,#f0d81d,#f0da21,#f0db24,#f0dc27,#f0dd2a,#f0de2c,#f0de2e,#f0df2f,#f0df31,#f0e032,#f0e033,#f0e034,#f0e135,#f0e135,#f0e135,#f0e135,#f0e035,#f0e034,#f0e034)"></i>
<i style="background:linear-gradient(90deg,#f06400,#f06300,#f06200,#f06100,#f06000,#f06000,#f06100,#f06300,#f06500,#f06800,#f06d00,#f07300,#f07900,#f08000,#f08800,#f08f00,#f09700,#f09f00,#f0a700,#f0af00,#f0b600,#f0bd00,#f0c302,#f0c706,#f0cb09,#f0ce0c,#f0d10e,#f0d410,#f0d615,#f0d71a,#f0d91e,#f0da22,#f0db25,#f0dc27,#f0dd2a,#f0dd2c,#f0de2d,#f0df2f,#f0df30,#f0df32,#f0e033,#f0e033,#f0e034,#f0e034,#f0e033,#f0e033,#f0e032,#f0e032)"></i>
<i style="background:linear-gradient(90deg,#f06500,#f06400,#f06300,#f06200,#f06100,#f06100,#f06200,#f06300,#f06600,#f06900,#f06d00,#f07300,#f07900,#f08000,#f08800,#f08f00,#f09700,#f09f00,#f0a600,#f0ae00,#f0b500,#f0bc00,#f0c101,#f0c605,#f0ca08,#f0cd0a,#f0d00d,#f0d30f,#f0d513,#f0d717,#f0d81c,#f0d91f,#f0da22,#f0db25,#f0dc28,#f0dd2a,#f0dd2c,#f0de2d,#f0de2f,#f0df30,#f0df31,#f0df32,#f0e032,#f0e032,#f0e032,#f0df31,#f0df31,#f0df30)"></i>
<i style="background:linear-gradient(90deg,#f06600,#f06500,#f06300,#f06300,#f06200,#f06200,#f06300,#f06400,#f06600,#f06900,#f06e00,#f07300,#f07a00,#f08000,#f08700,#f08f00,#f09600,#f09e00,#f0a600,#f0ad00,#f0b400,#f0bb00,#f0c000,#f0c504,#f0c907,#f0cc0a,#f0cf0c,#f0d20e,#f0d410,#f0d615,#f0d719,#f0d81d,#f0da20,#f0db23,#f0db26,#f0dc28,#f0dd2a,#f0dd2c,#f0de2d,#f0de2f,#f0df30,#f0df30,#f0df31,#f0df31,#f0df30,#f0df30,#f0df2f,#f0de2f)"></i>
<i style="background:linear-gradient(90deg,#f06600,#f06500,#f06400,#f06300,#f06300,#f06300,#f06300,#f06500,#f06700,#f06a00,#f06e00,#f07400,#f07a00,#f08000,#f08700,#f08f00,#f09600,#f09e00,#f0a500,#f0ac00,#f0b300,#f0ba00,#f0bf00,#f0c403,#f0c806,#f0cb09,#f0ce0b,#f0d10d,#f0d30f,#f0d513,#f0d617,#f0d81b,#f0d91e,#f0da21,#f0db24,#f0dc26,#f0dc29,#f0dd2a,#f0de2c,#f0de2d,#f0de2e,#f0df2f,#f0df2f,#f0df2f,#f0df2f,#f0de2f,#f0de2e,#f0de2d)"></i>
<i style="background:linear-gradient(90deg,#f06700,#f06600,#f06500,#f06400,#f06300,#f06300,#f06400,#f06500,#f06700,#f06a00,#f06f00,#f07400,#f07a00,#f08100,#f08700,#f08e00,#f09600,#f09d00,#f0a500,#f0ac00,#f0b300,#f0b900,#f0bf00,#f0c303,#f0c705,#f0ca08,#f0cd0b,#f0d00d,#f0d20f,#f0d411,#f0d616,#f0d719,#f0d81d,#f0d920,#f0da23,#f0db25,#f0dc27,#f0dd29,#f0dd2b,#f0de2c,#f0de2d,#f0de2e,#f0de2e,#f0de2e,#f0de2e,#f0de2e,#f0de2d,#f0de2c)"></i>
<i style="background:linear-gradient(90deg,#f06700,#f06600,#f06500,#f06400,#f06400,#f06400,#f06400,#f06600,#f06800,#f06b00,#f06f00,#f07400,#f07a00,#f08100,#f08700,#f08e00,#f09600,#f09d00,#f0a400,#f0ab00,#f0b200,#f0b800,#f0be00,#f0c302,#f0c605,#f0ca08,#f0cd0a,#f0cf0c,#f0d20e,#f0d410,#f0d514,#f0d718,#f0d81c,#f0d91f,#f0da22,#f0db24,#f0dc26,#f0dc28,#f0dd2a,#f0dd2b,#f0de2c,#f0de2d,#f0de2d,#f0de2d,#f0de2d,#f0de2d,#f0de2c,#f0dd2b)"></i>
<i style="background:linear-gradient(90deg,#f06800,#f06700,#f06600,#f06500,#f06400,#f06400,#f06500,#f06600,#f06800,#f06b00,#f06f00,#f07400,#f07a00,#f08100,#f08700,#f08e00,#f09600,#f09d00,#f0a400,#f0ab00,#f0b200,#f0b800,#f0be00,#f0c202,#f0c605,#f0c907,#f0cc0a,#f0cf0c,#f0d10e,#f0d410,#f0d513,#f0d617,#f0d81b,#f0d91e,#f0da21,#f0db23,#f0db25,#f0dc27,#f0dd29,#f0dd2a,#f0dd2c,#f0de2c,#f0de2d,#f0de2d,#f0de2c,#f0de2c,#f0dd2b,#f0dd2b)"></i>
<i style="background:linear-gradient(90deg,#f06800,#f06700,#f06600,#f06500,#f06400,#f06400,#f06500,#f06600,#f06800,#f06b00,#f06f00,#f07400,#f07a00,#f08100,#f08700,#f08e00,#f09600,#f09d00,#f0a400,#f0ab00,#f0b200,#f0b800,#f0bd00,#f0c202,#f0c605,#f0c907,#f0cc09,#f0cf0c,#f0d10e,#f0d30f,#f0d513,#f0d617,#f0d81a,#f0d91e,#f0da20,#f0da23,#f0db25,#f0dc27,#f0dc28,#f0dd2a,#f0dd2b,#f0dd2c,#f0de2c,#f0de2c,#f0dd2c,#f0dd2b,#f0dd2b,#f0dd2a)"></i>
<i style="background:linear-gradient(90deg,#f06800,#f06700,#f06600,#f06500,#f06500,#f06500,#f06500,#f06600,#f06800,#f06b00,#f06f00,#f07400,#f07a00,#f08100,#f08700,#f08e00,#f09600,#f09d00,#f0a400,#f0ab00,#f0b200,#f0b800,#f0be00,#f0c202,#f0c605,#f0c907,#f0cc09,#f0cf0c,#f0d10e,#f0d30f,#f0d513,#f0d617,#f0d71a,#f0d91d,#f0d920,#f0da22,#f0db25,#f0dc26,#f0dc28,#f0dd2a,#f0dd2b,#f0dd2b,#f0dd2c,#f0dd2c,#f0dd2b,#f0dd2b,#f0dd2a,#f0dd2a)"></i>
<i style="background:linear-gradient(90deg,#f06800,#f06700,#f06600,#f06500,#f06500,#f06500,#f06500,#f06600,#f06800,#f06b00,#f06f00,#f07500,#f07b00,#f08100,#f08800,#f08f00,#f09600,#f09d00,#f0a400,#f0ab00,#f0b200,#f0b800,#f0be00,#f0c202,#f0c605,#f0c907,#f0cc0a,#f0cf0c,#f0d10e,#f0d30f,#f0d513,#f0d617,#f0d71a,#f0d91d,#f0d920,#f0da22,#f0db24,#f0dc26,#f0dc28,#f0dd29,#f0dd2a,#f0dd2b,#f0dd2b,#f0dd2b,#f0dd2b,#f0dd2b,#f0dd2a,#f0dd2a)"></i>
<i style="background:linear-gradient(90deg,#f06800,#f06700,#f06600,#f06500,#f06500,#f06500,#f06500,#f06600,#f06800,#f06b00,#f06f00,#f07500,#f07b00,#f08100,#f08800,#f08f00,#f09600,#f09d00,#f0a500,#f0ac00,#f0b200,#f0b900,#f0be00,#f0c302,#f0c605,#f0c908,#f0cc0a,#f0cf0c,#f0d10e,#f0d410,#f0d513,#f0d617,#f0d81b,#f0d91e,#f0da20,#f0da22,#f0db25,#f0dc26,#f0dc28,#f0dd29,#f0dd2a,#f0dd2b,#f0dd2b,#f0dd2b,#f0dd2b,#f0dd2b,#f0dd2a,#f0dd29)"></i>
<i style="background:linear-gradient(90deg,#f06800,#f06700,#f06600,#f06500,#f06500,#f06500,#f06500,#f06600,#f06800,#f06b00,#f06f00,#f07500,#f07b00,#f08100,#f08800,#f08f00,#f09600,#f09e00,#f0a500,#f0ac00,#f0b300,#f0b900,#f0bf00,#f0c303,#f0c705,#f0ca08,#f0cd0a,#f0d00c,#f0d20e,#f0d410,#f0d514,#f0d718,#f0d81b,#f0d91e,#f0da21,#f0da23,#f0db25,#f0dc26,#f0dc28,#f0dd29,#f0dd2a,#f0dd2b,#f0dd2b,#f0dd2b,#f0dd2b,#f0dd2b,#f0dd2a,#f0dd2a)"></i>
<i style="background:linear-gradient(90deg,#f06800,#f06700,#f06600,#f06500,#f06400,#f06400,#f06500,#f06600,#f06800,#f06b00,#f06f00,#f07500,#f07b00,#f08100,#f08800,#f08f00,#f09700,#f09e00,#f0a600,#f0ad00,#f0b400,#f0ba00,#f0bf00,#f0c403,#f0c706,#f0cb09,#f0ce0b,#f0d00d,#f0d20f,#f0d411,#f0d615,#f0d719,#f0d81c,#f0d91f,#f0da21,#f0db23,#f0db25,#f0dc27,#f0dc28,#f0dd2a,#f0dd2b,#f0dd2b,#f0dd2c,#f0dd2c,#f0dd2b,#f0dd2b,#f0dd2a,#f0dd2a)"></i>
<i style="background:linear-gradient(90deg,#f06800,#f06700,#f06500,#f06500,#f06400,#f06400,#f06500,#f06600,#f06800,#f06b00,#f06f00,#f07500,#f07b00,#f08200,#f08800,#f09000,#f09700,#f09f00,#f0a600,#f0ae00,#f0b400,#f0bb00,#f0c000,#f0c504,#f0c807,#f0cc09,#f0ce0c,#f0d10e,#f0d30f,#f0d513,#f0d617,#f0d71a,#f0d91d,#f0d920,#f0da22,#f0db24,#f0db26,#f0dc27,#f0dc29,#f0dd2a,#f0dd2b,#f0dd2c,#f0dd2c,#f0dd2c,#f0dd2c,#f0dd2b,#f0dd2b,#f0dd2a)"></i>
<i style="background:linear-gradient(90deg,#f06700,#f06600,#f06500,#f06400,#f06400,#f06400,#f06400,#f06600,#f06800,#f06b00,#f06f00,#f07500,#f07b00,#f08200,#f08900,#f09000,#f09800,#f09f00,#f0a700,#f0ae00,#f0b500,#f0bc00,#f0c101,#f0c605,#f0c908,#f0cd0a,#f0cf0c,#f0d20e,#f0d410,#f0d615,#f0d718,#f0d81c,#f0d91f,#f0da21,#f0db23,#f0db25,#f0dc27,#f0dc28,#f0dd29,#f0dd2a,#f0dd2b,#f0de2c,#f0de2c,#f0de2c,#f0de2c,#f0dd2c,#f0dd2b,#f0dd2b)"></i>
<i style="background:linear-gradient(90deg,#f06700,#f06600,#f06500,#f06400,#f06300,#f06300,#f06400,#f06500,#f06700,#f06b00,#f06f00,#f07500,#f07b00,#f08200,#f08900,#f09100,#f09800,#f0a000,#f0a800,#f0af00,#f0b600,#f0bd00,#f0c202,#f0c706,#f0cb08,#f0ce0b,#f0d10d,#f0d30f,#f0d513,#f0d617,#f0d81a,#f0d91e,#f0da20,#f0da22,#f0db24,#f0dc26,#f0dc27,#f0dc29,#f0dd2a,#f0dd2b,#f0de2c,#f0de2d,#f0de2d,#f0de2d,#f0de2d,#f0de2c,#f0dd2c,#f0dd2b)"></i>
<i style="background:linear-gradient(90deg,#f06700,#f06500,#f06400,#f06300,#f06300,#f06300,#f06300,#f06500,#f06700,#f06a00,#f06f00,#f07400,#f07b00,#f08200,#f08900,#f09100,#f09900,#f0a100,#f0a900,#f0b000,#f0b800,#f0be00,#f0c403,#f0c807,#f0cc0a,#f0cf0c,#f0d20e,#f0d411,#f0d615,#f0d719,#f0d81d,#f0d920,#f0da22,#f0db24,#f0db26,#f0dc27,#f0dc29,#f0dd2a,#f0dd2b,#f0dd2c,#f0de2d,#f0de2d,#f0de2d,#f0de2d,#f0de2d,#f0de2d,#f0de2c,#f0de2c)"></i>
<i style="background:linear-gradient(90deg,#f06600,#f06500,#f06400,#f06300,#f06200,#f06200,#f06300,#f06400,#f06700,#f06a00,#f06f00,#f07400,#f07b00,#f08200,#f08a00,#f09200,#f09a00,#f0a200,#f0aa00,#f0b200,#f0b900,#f0c000,#f0c504,#f0ca08,#f0cd0b,#f0d10d,#f0d30f,#f0d514,#f0d718,#f0d81c,#f0d91f,#f0da22,#f0db24,#f0db26,#f0dc27,#f0dc29,#f0dd2a,#f0dd2b,#f0dd2c,#f0de2d,#f0de2d,#f0de2e,#f0de2e,#f0de2e,#f0de2e,#f0de2e,#f0de2d,#f0de2d)"></i>
<i style="background:linear-gradient(90deg,#f06600,#f06400,#f06300,#f06200,#f06200,#f06200,#f06200,#f06400,#f06600,#f06a00,#f06e00,#f07400,#f07b00,#f08200,#f08a00,#f09200,#f09a00,#f0a300,#f0ab00,#f0b300,#f0ba00,#f0c101,#f0c705,#f0cb09,#f0cf0c,#f0d20e,#f0d512,#f0d617,#f0d81b,#f0d91f,#f0da22,#f0db24,#f0dc26,#f0dc28,#f0dd29,#f0dd2a,#f0dd2b,#f0de2c,#f0de2d,#f0de2e,#f0de2e,#f0df2f,#f0df2f,#f0df2f,#f0df2f,#f0de2f,#f0de2e,#f0de2e)"></i>
<i style="background:linear-gradient(90deg,#f06500,#f06400,#f06300,#f06200,#f06100,#f06100,#f06200,#f06300,#f06600,#f06900,#f06e00,#f07400,#f07b00,#f08300,#f08b00,#f09300,#f09b00,#f0a400,#f0ac00,#f0b400,#f0bc00,#f0c302,#f0c807,#f0cd0a,#f0d10d,#f0d410,#f0d616,#f0d81b,#f0d91f,#f0da22,#f0db25,#f0dc27,#f0dc29,#f0dd2a,#f0dd2b,#f0de2c,#f0de2d,#f0de2d,#f0de2e,#f0de2f,#f0df2f,#f0df30,#f0df30,#f0df30,#f0df30,#f0df30,#f0df2f,#f0de2f)"></i>
<i style="background:linear-gradient(90deg,#f06500,#f06300,#f06200,#f06100,#f06000,#f06000,#f06100,#f06300,#f06500,#f06900,#f06e00,#f07400,#f07b00,#f08300,#f08b00,#f09300,#f09c00,#f0a500,#f0ad00,#f0b600,#f0be00,#f0c403,#f0ca08,#f0cf0c,#f0d20f,#f0d514,#f0d719,#f0d91e,#f0da22,#f0db26,#f0dc28,#f0dd2a,#f0dd2b,#f0de2d,#f0de2d,#f0de2e,#f0de2e,#f0de2f,#f0df2f,#f0df30,#f0df30,#f0df31,#f0df31,#f0df31,#f0df31,#f0df31,#f0df30,#f0df30)"></i>
<i style="background:linear-gradient(90deg,#f06400,#f06200,#f06100,#f06000,#f05f00,#f05f00,#f06000,#f06200,#f06400,#f06800,#f06d00,#f07400,#f07b00,#f08300,#f08b00,#f09400,#f09d00,#f0a600,#f0af00,#f0b700,#f0bf00,#f0c605,#f0cc09,#f0d10d,#f0d411,#f0d718,#f0d91e,#f0da22,#f0dc26,#f0dd29,#f0dd2b,#f0de2d,#f0de2e,#f0df2f,#f0df2f,#f0df30,#f0df30,#f0df30,#f0df30,#f0df31,#f0df32,#f0e032,#f0e032,#f0e032,#f0e032,#f0e032,#f0df31,#f0df31)"></i>
<i style="background:linear-gradient(90deg,#f06300,#f06200,#f06000,#f05f00,#ef5f00,#ef5f00,#f05f00,#f06100,#f06400,#f06800,#f06d00,#f07400,#f07b00,#f08300,#f08c00,#f09500,#f09e00,#f0a700,#f0b000,#f0b900,#f0c101,#f0c806,#f0ce0b,#f0d30f,#f0d615,#f0d81c,#f0da22,#f0dc27,#f0dd2a,#f0de2d,#f0df2f,#f0df30,#f0df31,#f0df32,#f0e032,#f0e032,#f0df32,#f0df32,#f0e032,#f0e032,#f0e033,#f0e033,#f0e033,#f0e033,#f0e033,#f0e033,#f0e033,#f0e032)"></i>
<i style="background:linear-gradient(90deg,#f06200,#f06100,#f05f00,#ef5e00,#ef5e00,#ef5e00,#ef5e00,#f06000,#f06300,#f06700,#f06d00,#f07300,#f07b00,#f08400,#f08c00,#f09500,#f09f00,#f0a800,#f0b200,#f0bb00,#f0c302,#f0ca08,#f0d00d,#f0d511,#f0d71a,#f0da21,#f0dc27,#f0dd2b,#f0de2e,#f0df31,#f0e033,#f0e034,#f0e034,#f0e034,#f0e034,#f0e034,#f0e034,#f0e033,#f0e033,#f0e034,#f0e034,#f0e035,#f0e135,#f0e135,#f0e035,#f0e034,#f0e034,#f0e034)"></i>
<i style="background:linear-gradient(90deg,#f06200,#f06000,#ef5f00,#ef5d00,#ef5d00,#ef5d00,#ef5e00,#f05f00,#f06200,#f06700,#f06c00,#f07300,#f07b00,#f08400,#f08d00,#f09600,#f0a000,#f0aa00,#f0b300,#f0bc00,#f0c404,#f0cc09,#f0d20e,#f0d616,#f0d91f,#f0db26,#f0dd2b,#f0df30,#f0e033,#f0e135,#f0e137,#f0e137,#f0e138,#f0e137,#f0e137,#f0e136,#f0e136,#f0e135,#f0e135,#f0e135,#f0e136,#f0e136,#f0e136,#f0e136,#f0e136,#f0e136,#f0e136,#f0e135)"></i>
<i style="background:linear-gradient(90deg,#f06100,#f05f00,#ef5e00,#ef5d00,#ef5c00,#ef5c00,#ef5d00,#ef5e00,#f06100,#f06600,#f06c00,#f07300,#f07b00,#f08400,#f08d00,#f09700,#f0a100,#f0ab00,#f0b500,#f0be00,#f0c605,#f0ce0b,#f0d410,#f0d81b,#f0db24,#f0dd2b,#f0df30,#f0e034,#f0e137,#f0e239,#f0e33b,#f0e33b,#f0e33b,#f0e23a,#f0e23a,#f0e239,#f0e238,#f0e137,#f0e137,#f0e137,#f0e137,#f0e137,#f0e138,#f0e138,#f0e137,#f0e137,#f0e137,#f0e137)"></i>
<i style="background:linear-gradient(90deg,#f06000,#ef5e00,#ef5d00,#ef5c00,#ef5b00,#ef5b00,#ef5c00,#ef5d00,#f06000,#f06500,#f06b00,#f07300,#f07b00,#f08400,#f08e00,#f09800,#f0a200,#f0ac00,#f0b600,#f0c000,#f0c807,#f0d00c,#f0d615,#f0da20,#f0dd29,#f0df30,#f0e135,#f0e239,#f0e33c,#f0e43e,#f0e43f,#f0e43f,#f0e43f,#f0e33e,#f0e33c,#f0e33b,#f0e23a,#f0e239,#f0e238,#f0e238,#f0e239,#f0e239,#f0e239,#f0e239,#f0e239,#f0e239,#f0e239,#f0e238)"></i>
<i style="background:linear-gradient(90deg,#ef5f00,#ef5d00,#ef5c00,#ef5b00,#ef5a00,#ef5a00,#ef5b00,#ef5d00,#f06000,#f06500,#f06b00,#f07200,#f07b00,#f08500,#f08e00,#f09900,#f0a300,#f0ae00,#f0b800,#f0c201,#f0ca08,#f0d20e,#f0d71a,#f0db25,#f0de2e,#f0e135,#f0e33b,#f0e43f,#f0e441,#f0e543,#f0e544,#f0e543,#f0e542,#f0e441,#f0e440,#f0e33e,#f0e33c,#f0e33b,#f0e23a,#f0e23a,#f0e23a,#f0e23b,#f0e33b,#f0e33b,#f0e23b,#f0e23a,#f0e23a,#f0e23a)"></i>
<i style="background:linear-gradient(90deg,#ef5e00,#ef5c00,#ef5b00,#ef5900,#ef5900,#ef5900,#ef5a00,#ef5c00,#ef5f00,#f06400,#f06a00,#f07200,#f07b00,#f08500,#f08f00,#f09900,#f0a400,#f0af00,#f0ba00,#f0c403,#f0cc0a,#f0d410,#f0d91f,#f0dd2b,#f0e034,#f0e33b,#f0e440,#f0e544,#f0e647,#f1e648,#f1e648,#f0e648,#f0e646,#f0e545,#f0e543,#f0e441,#f0e43f,#f0e33d,#f0e33c,#f0e33c,#f0e33c,#f0e33c,#f0e33c,#f0e33c,#f0e33c,#f0e33c,#f0e33c,#f0e33c)"></i>
<i style="background:linear-gradient(90deg,#ef5d00,#ef5b00,#ef5a00,#ef5800,#ef5800,#ef5800,#ef5900,#ef5a00,#ef5e00,#f06300,#f06a00,#f07200,#f07b00,#f08500,#f08f00,#f09a00,#f0a500,#f0b100,#f0bb00,#f0c504,#f0ce0b,#f0d615,#f0db24,#f0df30,#f0e239,#f0e441,#f0e646,#f1e74a,#f1e74c,#f1e74d,#f1e74d,#f1e74c,#f1e74b,#f1e648,#f0e646,#f0e544,#f0e441,#f0e43f,#f0e43e,#f0e33e,#f0e33e,#f0e33e,#f0e33e,#f0e33e,#f0e33e,#f0e33e,#f0e33e,#f0e33e)"></i>
<i style="background:linear-gradient(90deg,#ef5c00,#ef5a00,#ef5900,#ef5700,#ef5700,#ef5700,#ef5700,#ef5900,#ef5d00,#f06200,#f06900,#f07200,#f07b00,#f08500,#f09000,#f09b00,#f0a700,#f0b200,#f0bd00,#f0c706,#f0d00d,#f0d71a,#f0dd29,#f0e136,#f0e43f,#f0e647,#f1e74c,#f1e850,#f1e852,#f1e953,#f1e952,#f1e851,#f1e84f,#f1e74c,#f1e649,#f0e647,#f0e544,#f0e442,#f0e440,#f0e440,#f0e440,#f0e440,#f0e440,#f0e440,#f0e440,#f0e440,#f0e440,#f0e440)"></i>
<i style="background:linear-gradient(90deg,#ef5b00,#ef5900,#ef5800,#ef5600,#ef5500,#ef5500,#ef5600,#ef5800,#ef5c00,#f06100,#f06900,#f07100,#f07b00,#f08600,#f09100,#f09c00,#f0a800,#f0b300,#f0bf00,#f0c907,#f0d20f,#f0d91f,#f0de2f,#f0e33b,#f0e545,#f1e74d,#f1e952,#f1e956,#f1ea58,#f1ea58,#f1ea57,#f1e955,#f1e953,#f1e850,#f1e74d,#f1e64a,#f0e647,#f0e544,#f0e542,#f0e442,#f0e442,#f0e442,#f0e442,#f0e442,#f0e442,#f0e442,#f0e442,#f0e442)"></i>
<i style="background:linear-gradient(90deg,#ef5a00,#ef5800,#ef5600,#ef5500,#ef5400,#ef5400,#ef5500,#ef5700,#ef5b00,#f06100,#f06800,#f07100,#f07b00,#f08600,#f09100,#f09d00,#f0a900,#f0b500,#f0c101,#f0cb09,#f0d411,#f0db24,#f0e034,#f0e441,#f1e74c,#f1e953,#f1ea59,#f1eb5c,#f1eb5d,#f1eb5d,#f1eb5c,#f1eb5a,#f1ea57,#f1e954,#f1e850,#f1e74d,#f1e649,#f0e647,#f0e545,#f0e544,#f0e544,#f0e544,#f0e544,#f0e544,#f0e544,#f0e544,#f0e544,#f0e544)"></i>
<i style="background:linear-gradient(90deg,#ef5900,#ef5700,#ef5500,#ef5400,#ef5300,#ef5300,#ef5400,#ef5600,#ef5a00,#f06000,#f06800,#f07100,#f07b00,#f08600,#f09200,#f09e00,#f0aa00,#f0b600,#f0c202,#f0cd0a,#f0d616,#f0dd29,#f0e239,#f0e648,#f1e952,#f1ea5a,#f1ec5f,#f2ec62,#f2ed63,#f2ed63,#f2ec61,#f1ec5f,#f1eb5c,#f1ea58,#f1e954,#f1e850,#f1e74c,#f1e649,#f0e647,#f0e546,#f0e546,#f0e546,#f0e546,#f0e546,#f0e546,#f0e546,#f0e546,#f0e546)"></i>
<i style="background:linear-gradient(90deg,#ef5800,#ef5600,#ef5400,#ef5300,#ef5200,#ef5200,#ef5300,#ef5500,#ef5900,#ef5f00,#f06700,#f07000,#f07b00,#f08600,#f09200,#f09f00,#f0ab00,#f0b800,#f0c403,#f0cf0c,#f0d81a,#f0de2e,#f0e43f,#f1e74e,#f1ea58,#f1ec60,#f2ed65,#f2ee68,#f2ee69,#f2ee68,#f2ee67,#f2ed64,#f1ec60,#f1eb5c,#f1ea57,#f1e953,#f1e84f,#f1e74b,#f1e649,#f0e648,#f0e648,#f0e648,#f0e647,#f0e647,#f0e647,#f0e648,#f0e648,#f0e648)"></i>
<i style="background:linear-gradient(90deg,#ef5700,#ef5500,#ef5300,#ef5200,#ee5100,#ee5100,#ef5200,#ef5400,#ef5800,#ef5e00,#f06700,#f07000,#f07b00,#f08700,#f09300,#f0a000,#f0ad00,#f0ba00,#f0c605,#f0d10d,#f0d91f,#f0e033,#f0e545,#f1e954,#f1ec5f,#f2ee66,#f2ef6b,#f2ef6e,#f2ef6f,#f2ef6e,#f2ef6c,#f2ee68,#f2ed64,#f1ec60,#f1eb5b,#f1e956,#f1e852,#f1e74e,#f1e74b,#f1e64a,#f1e64a,#f1e649,#f1e649,#f1e649,#f1e649,#f1e64a,#f1e64a,#f1e64a)"></i>
<i style="background:linear-gradient(90deg,#ef5600,#ef5400,#ef5200,#ee5000,#ee5000,#ee5000,#ee5100,#ef5300,#ef5700,#ef5d00,#f06600,#f07000,#f07b00,#f08700,#f09300,#f0a000,#f0ae00,#f0bb00,#f0c706,#f0d30f,#f0db24,#f0e238,#f1e74b,#f1eb5a,#f2ed65,#f2ef6d,#f2f072,#f3f075,#f3f076,#f3f074,#f2f071,#f2ef6d,#f2ee69,#f2ed63,#f1ec5e,#f1ea59,#f1e954,#f1e850,#f1e74e,#f1e74c,#f1e74c,#f1e74b,#f1e74b,#f1e74b,#f1e74b,#f1e74c,#f1e74c,#f1e74c)"></i>
<i style="background:linear-gradient(90deg,#ef5500,#ef5300,#ee5100,#ee4f00,#ee4e00,#ee4e00,#ee4f00,#ef5200,#ef5600,#ef5c00,#f06500,#f06f00,#f07b00,#f08700,#f09400,#f0a100,#f0af00,#f0bd00,#f0c907,#f0d411,#f0dc29,#f0e33e,#f1e851,#f2ec61,#f2ef6c,#f3f074,#f3f179,#f3f17c,#f3f17c,#f3f17a,#f3f077,#f2f072,#f2ef6d,#f2ee67,#f2ec62,#f1eb5c,#f1ea57,#f1e953,#f1e850,#f1e84e,#f1e74e,#f1e74d,#f1e74d,#f1e74d,#f1e74d,#f1e74e,#f1e74e,#f1e84e)"></i>
<i style="background:linear-gradient(90deg,#ef5400,#ef5200,#ee5000,#ee4e00,#ee4d00,#ee4d00,#ee4e00,#ee5100,#ef5500,#ef5b00,#f06500,#f06f00,#f07b00,#f08700,#f09400,#f0a200,#f0b000,#f0be00,#f0cb08,#f0d615,#f0de2d,#f0e543,#f1ea57,#f2ee67,#f2f072,#f3f17b,#f4f280,#f4f282,#f4f282,#f4f280,#f3f17c,#f3f178,#f2f072,#f2ef6b,#f2ed65,#f1ec5f,#f1ea5a,#f1e955,#f1e952,#f1e850,#f1e850,#f1e84f,#f1e84f,#f1e84f,#f1e84f,#f1e850,#f1e850,#f1e850)"></i>
<i style="background:linear-gradient(90deg,#ef5300,#ee5100,#ee4f00,#ee4d00,#ee4c00,#ee4c00,#ee4d00,#ee5000,#ef5400,#ef5b00,#f06400,#f06f00,#f07b00,#f08800,#f09500,#f0a300,#f0b100,#f0c000,#f0cc0a,#f0d719,#f0e032,#f1e649,#f1eb5d,#f2ef6d,#f3f179,#f4f281,#f4f387,#f4f389,#f4f388,#f4f386,#f4f282,#f3f17d,#f3f076,#f2ef6f,#f2ee69,#f2ed62,#f1eb5d,#f1ea58,#f1e954,#f1e952,#f1e852,#f1e851,#f1e851,#f1e851,#f1e851,#f1e852,#f1e852,#f1e952)"></i>
<i style="background:linear-gradient(90deg,#ef5200,#ee5000,#ee4d00,#ee4c00,#ee4b00,#ee4b00,#ee4c00,#ee4f00,#ef5300,#ef5a00,#f06400,#f06f00,#f07b00,#f08800,#f09600,#f0a400,#f0b200,#f0c101,#f0ce0b,#f0d91e,#f0e137,#f1e84e,#f2ed63,#f3f074,#f4f280,#f4f388,#f5f38d,#f5f48f,#f5f48f,#f4f38c,#f4f387,#f4f282,#f3f17b,#f3f074,#f2ef6c,#f2ed66,#f1ec5f,#f1eb5a,#f1ea57,#f1e954,#f1e954,#f1e953,#f1e953,#f1e953,#f1e953,#f1e954,#f1e954,#f1e954)"></i>
<i style="background:linear-gradient(90deg,#ee5100,#ee4f00,#ee4c00,#ee4b00,#ee4a00,#ee4a00,#ee4b00,#ee4e00,#ef5200,#ef5900,#f06300,#f06e00,#f07b00,#f08800,#f09600,#f0a500,#f0b400,#f0c202,#f0cf0c,#f0da22,#f0e33b,#f1e954,#f2ee69,#f3f17a,#f4f387,#f5f48f,#f5f494,#f5f596,#f5f495,#f5f492,#f5f38d,#f4f387,#f4f280,#f3f178,#f2f070,#f2ee69,#f2ed62,#f1eb5d,#f1ea59,#f1ea57,#f1e956,#f1e955,#f1e955,#f1e955,#f1e955,#f1e956,#f1e956,#f1ea56)"></i>
<i style="background:linear-gradient(90deg,#ee5000,#ee4e00,#ee4b00,#ee4a00,#ee4900,#ee4900,#ee4a00,#ee4c00,#ee5100,#ef5800,#f06200,#f06e00,#f07b00,#f08800,#f09700,#f0a600,#f0b500,#f0c403,#f0d10e,#f0db26,#f0e440,#f1ea59,#f2ef6f,#f4f281,#f5f38d,#f5f595,#f6f59a,#f6f59c,#f6f59b,#f5f597,#f5f492,#f4f38c,#f4f284,#f3f17c,#f3f074,#f2ef6c,#f2ed65,#f1ec5f,#f1eb5b,#f1ea59,#f1ea58,#f1ea57,#f1ea57,#f1ea57,#f1ea57,#f1ea57,#f1ea58,#f1ea58)"></i>
<i style="background:linear-gradient(90deg,#ee4f00,#ee4d00,#ee4a00,#ee4900,#ed4800,#ed4800,#ee4900,#ee4b00,#ee5000,#ef5700,#f06200,#f06e00,#f07b00,#f08900,#f09700,#f0a600,#f0b600,#f0c504,#f0d30f,#f0dd29,#f0e545,#f1ec5e,#f3f075,#f4f387,#f5f494,#f6f59c,#f6f6a0,#f6f6a1,#f6f6a0,#f6f69d,#f5f597,#f5f490,#f4f388,#f4f280,#f3f077,#f2ef6f,#f2ee67,#f2ec61,#f1eb5d,#f1eb5b,#f1ea5a,#f1ea59,#f1ea59,#f1ea59,#f1ea59,#f1ea59,#f1ea5a,#f1eb5a)"></i>
<i style="background:linear-gradient(90deg,#ee4e00,#ee4c00,#ee4900,#ed4700,#ed4600,#ed4600,#ed4800,#ee4a00,#ee4f00,#ef5600,#f06100,#f06d00,#f07b00,#f08900,#f09800,#f0a700,#f0b700,#f0c605,#f0d410,#f0de2d,#f1e649,#f2ed63,#f3f17b,#f5f38d,#f6f59a,#f6f6a2,#f7f7a5,#f7f7a6,#f6f6a5,#f6f6a2,#f6f69c,#f5f595,#f5f38d,#f4f284,#f3f17b,#f2f072,#f2ee6a,#f2ed64,#f1ec5f,#f1eb5c,#f1eb5b,#f1eb5b,#f1eb5b,#f1eb5b,#f1eb5b,#f1eb5b,#f1eb5c,#f1eb5c)"></i>
<i style="background:linear-gradient(90deg,#ee4d00,#ee4b00,#ed4800,#ed4600,#ed4500,#ed4500,#ed4700,#ee4900,#ee4e00,#ef5600,#f06100,#f06d00,#f07b00,#f08900,#f09800,#f0a800,#f0b800,#f0c706,#f0d513,#f0df31,#f1e74e,#f2ee68,#f4f280,#f5f493,#f6f6a0,#f7f7a6,#f7f7aa,#f7f7ab,#f7f7a9,#f7f7a6,#f6f6a1,#f6f59a,#f5f491,#f4f387,#f3f17e,#f3f075,#f2ef6d,#f2ed66,#f2ec61,#f1ec5e,#f1eb5d,#f1eb5d,#f1eb5c,#f1eb5c,#f1eb5d,#f1eb5d,#f1eb5e,#f1ec5e)"></i>
<i style="background:linear-gradient(90deg,#ee4c00,#ee4a00,#ed4700,#ed4500,#ec4400,#ec4400,#ed4600,#ee4800,#ee4d00,#ef5500,#f06000,#f06d00,#f07b00,#f08900,#f09900,#f0a900,#f0b900,#f0c807,#f0d616,#f0e035,#f1e952,#f2ef6d,#f4f286,#f5f599,#f6f6a5,#f7f7ab,#f7f7ae,#f7f7af,#f7f7ad,#f7f7aa,#f6f6a5,#f6f69e,#f5f595,#f4f38b,#f4f281,#f3f178,#f2ef6f,#f2ee68,#f2ed63,#f2ec60,#f1ec5f,#f1ec5e,#f1ec5e,#f1ec5e,#f1ec5e,#f1ec5f,#f1ec5f,#f1ec60)"></i>
<i style="background:linear-gradient(90deg,#ee4b00,#ee4900,#ed4600,#ec4400,#ec4300,#ec4300,#ec4500,#ed4800,#ee4c00,#ef5400,#f05f00,#f06d00,#f07b00,#f08900,#f09900,#f0a900,#f0ba00,#f0ca08,#f0d719,#f0e238,#f1ea56,#f2f072,#f4f38b,#f6f69e,#f7f7a9,#f8f8af,#f8f8b3,#f8f8b3,#f8f8b1,#f7f7ae,#f7f7a8,#f6f6a2,#f5f599,#f5f48f,#f4f284,#f3f17b,#f2f072,#f2ef6a,#f2ed65,#f2ec62,#f2ec61,#f2ec60,#f1ec60,#f1ec60,#f1ec60,#f2ec60,#f2ec61,#f2ec62)"></i>
<i style="background:linear-gradient(90deg,#ee4b00,#ed4800,#ed4500,#ec4400,#ec4200,#ec4200,#ec4400,#ed4700,#ee4c00,#ef5400,#ef5f00,#f06c00,#f07b00,#f08a00,#f09900,#f0aa00,#f0bb00,#f0cb09,#f0d81c,#f0e33b,#f1eb5b,#f3f077,#f5f490,#f6f6a3,#f7f7ad,#f8f8b4,#f8f8b7,#f8f8b7,#f8f8b5,#f8f8b1,#f7f7ac,#f7f7a5,#f6f69d,#f5f492,#f4f387,#f3f17d,#f3f074,#f2ef6c,#f2ee67,#f2ed64,#f2ed62,#f2ec62,#f2ec61,#f2ec61,#f2ec62,#f2ed62,#f2ed63,#f2ed63)"></i>
<i style="background:linear-gradient(90deg,#ee4a00,#ed4700,#ec4500,#ec4300,#ec4200,#ec4200,#ec4300,#ed4600,#ee4b00,#ef5300,#ef5e00,#f06c00,#f07b00,#f08a00,#f09a00,#f0ab00,#f0bc00,#f0cc09,#f0d91f,#f0e43f,#f1ec5e,#f3f17c,#f5f595,#f7f7a7,#f8f8b1,#f8f8b8,#f9f9bb,#f9f9bb,#f9f9b9,#f8f8b5,#f8f8af,#f7f7a8,#f6f6a0,#f5f595,#f4f38a,#f4f280,#f3f076,#f2ef6e,#f2ee69,#f2ed65,#f2ed64,#f2ed63,#f2ed63,#f2ed63,#f2ed63,#f2ed64,#f2ed64,#f2ed65)"></i>
<i style="background:linear-gradient(90deg,#ee4900,#ed4600,#ec4400,#ec4200,#eb4100,#eb4100,#ec4200,#ed4500,#ee4a00,#ef5200,#ef5e00,#f06c00,#f07b00,#f08a00,#f09a00,#f0ab00,#f0bd00,#f0cd0a,#f0da22,#f0e542,#f2ed62,#f4f280,#f6f59a,#f7f7ab,#f8f8b5,#f9f9bb,#f9f9bf,#f9f9bf,#f9f9bd,#f8f8b8,#f8f8b2,#f7f7ab,#f6f6a3,#f5f598,#f5f38d,#f4f282,#f3f179,#f2f070,#f2ef6a,#f2ee67,#f2ed65,#f2ed65,#f2ed64,#f2ed64,#f2ed65,#f2ed65,#f2ed66,#f2ee67)"></i>
<i style="background:linear-gradient(90deg,#ee4800,#ed4500,#ec4300,#eb4100,#eb4000,#eb4000,#eb4100,#ec4400,#ee4900,#ef5200,#ef5e00,#f06c00,#f07b00,#f08a00,#f09b00,#f0ac00,#f0be00,#f0ce0b,#f0db24,#f0e545,#f2ed66,#f4f284,#f6f69e,#f7f7ae,#f8f8b9,#f9f9bf,#f9f9c2,#f9f9c2,#f9f9c0,#f9f9bb,#f8f8b5,#f7f7ae,#f7f7a5,#f6f59b,#f5f490,#f4f285,#f3f17b,#f2f072,#f2ef6c,#f2ee68,#f2ee67,#f2ed66,#f2ed66,#f2ed66,#f2ed66,#f2ee66,#f2ee67,#f2ee68)"></i>
<i style="background:linear-gradient(90deg,#ed4800,#ed4500,#ec4200,#eb4000,#eb3f00,#eb3f00,#eb4000,#ec4400,#ee4900,#ef5100,#ef5d00,#f06b00,#f07b00,#f08a00,#f09b00,#f0ac00,#f0be00,#f0cf0c,#f0dc27,#f1e648,#f2ee69,#f4f388,#f6f6a2,#f8f8b2,#f9f9bc,#f9f9c3,#fafac6,#fafac6,#fafac3,#f9f9be,#f8f8b8,#f8f8b0,#f7f7a8,#f6f69e,#f5f492,#f4f387,#f3f17d,#f3f074,#f2ef6d,#f2ee6a,#f2ee68,#f2ee67,#f2ee67,#f2ee67,#f2ee67,#f2ee68,#f2ee69,#f2ee69)"></i>
<i style="background:linear-gradient(90deg,#ed4700,#ec4400,#ec4200,#eb4000,#eb3e00,#eb3e00,#eb4000,#ec4300,#ed4800,#ee5100,#ef5d00,#f06b00,#f07b00,#f08b00,#f09b00,#f0ad00,#f0bf00,#f0cf0c,#f0dc29,#f1e74b,#f2ef6c,#f4f38c,#f7f7a5,#f8f8b5,#f9f9bf,#fafac6,#fafac9,#fafac9,#fafac6,#f9f9c1,#f9f9bb,#f8f8b3,#f7f7aa,#f6f6a1,#f5f495,#f4f389,#f3f17e,#f3f076,#f2ef6f,#f2ef6b,#f2ee69,#f2ee68,#f2ee68,#f2ee68,#f2ee68,#f2ee69,#f2ee6a,#f2ef6b)"></i>
<i style="background:linear-gradient(90deg,#ed4600,#ec4400,#eb4100,#eb3f00,#ea3e00,#ea3e00,#eb3f00,#ec4200,#ed4700,#ee5000,#ef5c00,#f06b00,#f07b00,#f08b00,#f09c00,#f0ad00,#f0c000,#f0d00d,#f0dd2b,#f1e74e,#f2ef6f,#f5f48f,#f7f7a8,#f8f8b8,#f9f9c2,#fafac9,#fafacd,#fafacd,#fafac9,#fafac4,#f9f9bd,#f8f8b5,#f7f7ac,#f6f6a2,#f5f597,#f4f38b,#f4f280,#f3f077,#f2f070,#f2ef6c,#f2ef6b,#f2ee6a,#f2ee69,#f2ee69,#f2ee69,#f2ef6a,#f2ef6b,#f2ef6c)"></i>
<i style="background:linear-gradient(90deg,#ed4600,#ec4300,#eb4000,#eb3e00,#ea3d00,#ea3d00,#eb3f00,#ec4200,#ed4700,#ee5000,#ef5c00,#f06b00,#f07b00,#f08b00,#f09c00,#f0ae00,#f0c000,#f0d10d,#f0de2d,#f1e850,#f2f072,#f5f492,#f7f7aa,#f9f9ba,#fafac5,#fafacd,#fbfbd1,#fbfbd0,#fafacc,#fafac6,#f9f9bf,#f8f8b7,#f7f7ae,#f6f6a4,#f5f599,#f5f38d,#f4f282,#f3f178,#f2f071,#f2ef6d,#f2ef6c,#f2ef6b,#f2ef6a,#f2ef6a,#f2ef6a,#f2ef6b,#f2ef6c,#f2ef6d)"></i>
<i style="background:linear-gradient(90deg,#ed4500,#ec4300,#eb4000,#eb3e00,#ea3d00,#ea3d00,#eb3e00,#eb4100,#ed4600,#ee4f00,#ef5c00,#f06b00,#f07a00,#f08b00,#f09c00,#f0ae00,#f0c101,#f0d10e,#f0de2e,#f1e852,#f3f074,#f5f595,#f7f7ac,#f9f9bd,#fafac7,#fbfbd0,#fbfbd4,#fbfbd3,#fbfbcf,#fafac8,#f9f9c1,#f8f8b9,#f8f8af,#f7f7a5,#f6f59a,#f5f48e,#f4f283,#f3f17a,#f2f072,#f2ef6e,#f2ef6c,#f2ef6b,#f2ef6b,#f2ef6b,#f2ef6b,#f2ef6c,#f2ef6d,#f2ef6e)"></i>
<i style="background:linear-gradient(90deg,#ed4500,#ec4200,#eb3f00,#ea3d00,#ea3c00,#ea3c00,#ea3e00,#eb4100,#ed4600,#ee4f00,#ef5c00,#f06b00,#f07a00,#f08b00,#f09c00,#f0af00,#f0c101,#f0d20e,#f0df30,#f1e954,#f3f077,#f5f597,#f7f7ae,#f9f9bf,#fafaca,#fbfbd3,#fbfbd7,#fbfbd6,#fbfbd2,#fafacb,#f9f9c3,#f9f9ba,#f8f8b1,#f7f7a7,#f6f59c,#f5f48f,#f4f284,#f3f17b,#f3f073,#f2ef6f,#f2ef6d,#f2ef6c,#f2ef6c,#f2ef6c,#f2ef6c,#f2ef6d,#f2ef6e,#f2ef6f)"></i>
<i style="background:linear-gradient(90deg,#ec4500,#ec4200,#eb3f00,#ea3d00,#ea3c00,#ea3c00,#ea3d00,#eb4000,#ed4600,#ee4f00,#ef5b00,#f06b00,#f07a00,#f08b00,#f09d00,#f0af00,#f0c201,#f0d20f,#f0df31,#f1e955,#f3f179,#f5f599,#f8f8b0,#f9f9c0,#fafacc,#fbfbd5,#fcfcd9,#fbfbd8,#fbfbd4,#fafacd,#fafac4,#f9f9bb,#f8f8b2,#f7f7a8,#f6f69d,#f5f491,#f4f285,#f3f17c,#f3f074,#f2f070,#f2ef6e,#f2ef6d,#f2ef6c,#f2ef6c,#f2ef6d,#f2ef6e,#f2ef6e,#f2ef6f)"></i>
<i style="background:linear-gradient(90deg,#ec4400,#ec4100,#eb3f00,#ea3d00,#ea3b00,#ea3b00,#ea3d00,#eb4000,#ed4600,#ee4e00,#ef5b00,#f06a00,#f07a00,#f08b00,#f09d00,#f0af00,#f0c201,#f0d30f,#f0e032,#f1ea56,#f3f17a,#f6f59b,#f8f8b1,#f9f9c2,#fbfbce,#fbfbd7,#fcfcdb,#fcfcda,#fbfbd6,#fbfbce,#fafac5,#f9f9bc,#f8f8b3,#f7f7a9,#f6f69e,#f5f491,#f4f286,#f3f17c,#f3f075,#f2f070,#f2ef6f,#f2ef6d,#f2ef6d,#f2ef6d,#f2ef6d,#f2ef6e,#f2ef6f,#f2f070)"></i>
<i style="background:linear-gradient(90deg,#ec4400,#eb4100,#eb3f00,#ea3c00,#ea3b00,#ea3b00,#ea3d00,#eb4000,#ed4500,#ee4e00,#ef5b00,#f06a00,#f07a00,#f08b00,#f09d00,#f0af00,#f0c202,#f0d30f,#f0e033,#f1ea57,#f3f17b,#f6f69c,#f8f8b3,#f9f9c3,#fbfbd0,#fcfcd9,#fcfcdd,#fcfcdc,#fbfbd7,#fbfbd0,#fafac6,#f9f9bd,#f8f8b4,#f7f7a9,#f6f69f,#f5f492,#f4f387,#f3f17d,#f3f075,#f2f071,#f2ef6f,#f2ef6e,#f2ef6d,#f2ef6d,#f2ef6e,#f2ef6f,#f2ef6f,#f2f071)"></i>
<i style="background:linear-gradient(90deg,#ec4400,#eb4100,#eb3e00,#ea3c00,#ea3b00,#ea3b00,#ea3c00,#eb4000,#ed4500,#ee4e00,#ef5b00,#f06a00,#f07a00,#f08b00,#f09d00,#f0b000,#f0c202,#f0d310,#f0e033,#f1ea58,#f3f17c,#f6f69e,#f8f8b4,#fafac4,#fbfbd1,#fcfcda,#fcfcde,#fcfcdd,#fcfcd9,#fbfbd1,#fafac7,#f9f9be,#f8f8b4,#f7f7aa,#f6f6a0,#f5f493,#f4f387,#f3f17d,#f3f076,#f2f071,#f2ef6f,#f2ef6e,#f2ef6e,#f2ef6e,#f2ef6e,#f2ef6f,#f2f070,#f2f071)"></i>
<i style="background:linear-gradient(90deg,#ec4400,#eb4100,#eb3e00,#ea3c00,#ea3b00,#ea3b00,#ea3c00,#eb4000,#ed4500,#ee4e00,#ef5b00,#f06a00,#f07a00,#f08b00,#f09d00,#f0b000,#f0c202,#f0d410,#f0e034,#f1ea59,#f3f17d,#f6f69f,#f8f8b4,#fafac5,#fbfbd3,#fcfcdb,#fcfcdf,#fcfcde,#fcfcda,#fbfbd2,#fafac8,#f9f9bf,#f8f8b5,#f7f7ab,#f6f6a0,#f5f493,#f4f388,#f3f17e,#f3f076,#f2f072,#f2f070,#f2ef6f,#f2ef6e,#f2ef6e,#f2ef6f,#f2ef6f,#f2f070,#f2f071)"></i>
<i style="background:linear-gradient(90deg,#ec4400,#eb4100,#eb3e00,#ea3c00,#ea3b00,#ea3b00,#ea3c00,#eb3f00,#ed4500,#ee4e00,#ef5b00,#f06a00,#f07a00,#f08b00,#f09d00,#f0b000,#f0c302,#f0d410,#f0e035,#f1ea5a,#f3f17e,#f6f6a0,#f8f8b5,#fafac6,#fbfbd4,#fcfcdd,#fcfce0,#fcfcdf,#fcfcdb,#fbfbd3,#fafac9,#f9f9bf,#f8f8b5,#f7f7ab,#f6f6a1,#f5f494,#f4f388,#f3f17e,#f3f077,#f2f072,#f2f070,#f2ef6f,#f2ef6e,#f2ef6e,#f2ef6f,#f2ef70,#f2f071,#f2f072)"></i>
<i style="background:linear-gradient(90deg,#ec4400,#eb4100,#eb3e00,#ea3c00,#ea3a00,#ea3a00,#ea3c00,#eb3f00,#ec4500,#ee4e00,#ef5b00,#f06a00,#f07a00,#f08b00,#f09d00,#f0b000,#f0c302,#f0d410,#f0e135,#f1eb5a,#f3f27f,#f6f6a0,#f8f8b6,#fafac6,#fbfbd5,#fcfcdd,#fcfce1,#fcfce0,#fcfcdc,#fbfbd4,#fafac9,#f9f9c0,#f8f8b6,#f7f7ab,#f6f6a1,#f5f494,#f4f388,#f3f17e,#f3f077,#f2f072,#f2f070,#f2ef6f,#f2ef6f,#f2ef6f,#f2ef6f,#f2f070,#f2f071,#f2f072)"></i>
<i style="background:linear-gradient(90deg,#ec4300,#eb4000,#ea3e00,#ea3c00,#ea3a00,#ea3a00,#ea3c00,#eb3f00,#ec4500,#ee4e00,#ef5b00,#f06a00,#f07a00,#f08b00,#f09d00,#f0b000,#f0c302,#f0d410,#f0e135,#f1eb5b,#f3f27f,#f6f6a1,#f8f8b6,#fafac7,#fbfbd5,#fcfcde,#fcfce2,#fcfce1,#fcfcdc,#fbfbd4,#fafaca,#f9f9c0,#f8f8b6,#f7f7ac,#f6f6a1,#f5f495,#f4f389,#f3f27f,#f3f077,#f3f073,#f2f071,#f2ef6f,#f2ef6f,#f2ef6f,#f2ef6f,#f2f070,#f2f071,#f2f072)"></i>
<i style="background:linear-gradient(90deg,#ec4300,#eb4000,#ea3e00,#ea3c00,#ea3a00,#ea3a00,#ea3c00,#eb3f00,#ec4500,#ee4e00,#ef5b00,#f06a00,#f07a00,#f08b00,#f09d00,#f0b000,#f0c302,#f0d411,#f0e136,#f1eb5b,#f4f280,#f6f6a1,#f8f8b7,#fafac7,#fbfbd6,#fcfcdf,#fcfce2,#fcfce2,#fcfcdd,#fbfbd5,#fafaca,#f9f9c1,#f8f8b7,#f7f7ac,#f6f6a1,#f5f495,#f4f389,#f3f27f,#f3f177,#f3f073,#f2f071,#f2ef70,#f2ef6f,#f2ef6f,#f2ef6f,#f2f070,#f2f071,#f2f072)"></i>
<i style="background:linear-gradient(90deg,#ec4300,#eb4000,#ea3e00,#ea3b00,#e93a00,#e93a00,#ea3c00,#eb3f00,#ec4400,#ee4e00,#ef5b00,#f06a00,#f07a00,#f08b00,#f09d00,#f0b000,#f0c302,#f0d411,#f0e136,#f1eb5c,#f4f280,#f6f6a1,#f8f8b7,#fafac8,#fbfbd6,#fcfcdf,#fcfce3,#fcfce2,#fcfcdd,#fbfbd5,#fafacb,#f9f9c1,#f8f8b7,#f7f7ac,#f6f6a2,#f5f595,#f4f389,#f3f27f,#f3f177,#f3f073,#f2f071,#f2ef70,#f2ef6f,#f2ef6f,#f2ef70,#f2f070,#f2f071,#f2f072)"></i>
<i style="background:linear-gradient(90deg,#ec4300,#eb4000,#ea3e00,#ea3b00,#e93a00,#e93a00,#ea3c00,#eb3f00,#ec4400,#ee4d00,#ef5a00,#f06a00,#f07a00,#f08b00,#f09d00,#f0b000,#f0c302,#f0d411,#f0e136,#f1eb5c,#f4f281,#f6f6a2,#f8f8b7,#fafac8,#fbfbd7,#fcfce0,#fcfce3,#fcfce2,#fcfcde,#fbfbd6,#fafacb,#f9f9c1,#f8f8b7,#f7f7ac,#f6f6a2,#f5f595,#f4f389,#f3f27f,#f3f178,#f3f073,#f2f071,#f2f070,#f2ef6f,#f2ef6f,#f2ef70,#f2f070,#f2f071,#f3f073)"></i>
<i style="background:linear-gradient(90deg,#ec4300,#eb4000,#ea3d00,#ea3b00,#e93a00,#e93a00,#ea3c00,#eb3f00,#ec4400,#ee4d00,#ef5a00,#f06a00,#f07a00,#f08b00,#f09d00,#f0b000,#f0c303,#f0d411,#f0e136,#f1eb5c,#f4f281,#f6f6a2,#f8f8b7,#fafac8,#fbfbd7,#fcfce0,#fcfce3,#fcfce3,#fcfcde,#fbfbd6,#fafacb,#f9f9c1,#f8f8b7,#f7f7ac,#f6f6a2,#f5f595,#f4f389,#f3f27f,#f3f178,#f3f073,#f2f071,#f2f070,#f2ef6f,#f2ef6f,#f2f070,#f2f071,#f2f071,#f3f073)"></i>
<i style="background:linear-gradient(90deg,#ec4300,#eb4000,#ea3d00,#ea3b00,#e93a00,#e93a00,#ea3c00,#eb3f00,#ec4400,#ee4d00,#ef5a00,#f06a00,#f07a00,#f08b00,#f09d00,#f0b000,#f0c303,#f0d411,#f0e136,#f1eb5c,#f4f281,#f6f6a2,#f8f8b7,#fafac8,#fbfbd7,#fcfce0,#fdfde4,#fcfce3,#fcfcde,#fbfbd6,#fafacb,#f9f9c1,#f8f8b7,#f7f7ad,#f6f6a2,#f5f595,#f4f389,#f3f27f,#f3f178,#f3f073,#f2f071,#f2f070,#f2ef6f,#f2ef6f,#f2f070,#f2f071,#f2f072,#f3f073)"></i>
<i style="background:linear-gradient(90deg,#ec4300,#eb4000,#ea3d00,#ea3b00,#e93a00,#e93a00,#ea3c00,#eb3f00,#ec4400,#ee4d00,#ef5a00,#f06a00,#f07a00,#f08b00,#f09d00,#f0b000,#f0c303,#f0d411,#f0e136,#f1eb5c,#f4f281,#f6f6a2,#f8f8b7,#fafac8,#fbfbd7,#fcfce0,#fdfde4,#fcfce3,#fcfcde,#fbfbd6,#fafacb,#f9f9c1,#f8f8b7,#f7f7ad,#f6f6a2,#f5f595,#f4f389,#f3f27f,#f3f178,#f3f073,#f2f071,#f2f070,#f2ef6f,#f2ef6f,#f2f070,#f2f071,#f2f072,#f3f073)"></i>
<i style="background:linear-gradient(90deg,#ec4300,#eb4000,#ea3d00,#ea3b00,#e93a00,#e93a00,#ea3c00,#eb3f00,#ec4400,#ee4d00,#ef5a00,#f06a00,#f07a00,#f08b00,#f09d00,#f0b000,#f0c303,#f0d411,#f0e136,#f1eb5c,#f4f281,#f6f6a2,#f8f8b7,#fafac8,#fbfbd7,#fcfce0,#fcfce3,#fcfce3,#fcfcde,#fbfbd6,#fafacb,#f9f9c1,#f8f8b7,#f7f7ac,#f6f6a2,#f5f595,#f4f389,#f3f27f,#f3f178,#f3f073,#f2f071,#f2f070,#f2ef6f,#f2ef6f,#f2f070,#f2f070,#f2f071,#f3f073)"></i>
<i style="background:linear-gradient(90deg,#ec4300,#eb4000,#ea3e00,#ea3b00,#e93a00,#e93a00,#ea3c00,#eb3f00,#ec4400,#ee4d00,#ef5a00,#f06a00,#f07a00,#f08b00,#f09d00,#f0b000,#f0c302,#f0d411,#f0e136,#f1eb5c,#f4f281,#f6f6a2,#f8f8b7,#fafac8,#fbfbd7,#fcfce0,#fcfce3,#fcfce2,#fcfcde,#fbfbd6,#fafacb,#f9f9c1,#f8f8b7,#f7f7ac,#f6f6a2,#f5f595,#f4f389,#f3f27f,#f3f178,#f3f073,#f2f071,#f2f070,#f2ef6f,#f2ef6f,#f2ef70,#f2f070,#f2f071,#f3f073)"></i>
<i style="background:linear-gradient(90deg,#ec4300,#eb4000,#ea3e00,#ea3b00,#e93a00,#e93a00,#ea3c00,#eb3f00,#ec4400,#ee4e00,#ef5b00,#f06a00,#f07a00,#f08b00,#f09d00,#f0b000,#f0c302,#f0d411,#f0e136,#f1eb5c,#f4f280,#f6f6a1,#f8f8b7,#fafac8,#fbfbd6,#fcfcdf,#fcfce3,#fcfce2,#fcfcdd,#fbfbd5,#fafacb,#f9f9c1,#f8f8b7,#f7f7ac,#f6f6a2,#f5f595,#f4f389,#f3f27f,#f3f177,#f3f073,#f2f071,#f2ef70,#f2ef6f,#f2ef6f,#f2ef70,#f2f070,#f2f071,#f2f072)"></i>
<i style="background:linear-gradient(90deg,#ec4300,#eb4000,#ea3e00,#ea3b00,#ea3a00,#ea3a00,#ea3c00,#eb3f00,#ec4400,#ee4e00,#ef5b00,#f06a00,#f07a00,#f08b00,#f09d00,#f0b000,#f0c302,#f0d411,#f0e136,#f1eb5b,#f4f280,#f6f6a1,#f8f8b7,#fafac7,#fbfbd6,#fcfcdf,#fcfce3,#fcfce2,#fcfcdd,#fbfbd5,#fafaca,#f9f9c1,#f8f8b7,#f7f7ac,#f6f6a2,#f5f595,#f4f389,#f3f27f,#f3f177,#f3f073,#f2f071,#f2ef70,#f2ef6f,#f2ef6f,#f2ef6f,#f2f070,#f2f071,#f2f072)"></i>
<i style="background:linear-gradient(90deg,#ec4300,#eb4000,#ea3e00,#ea3c00,#ea3a00,#ea3a00,#ea3c00,#eb3f00,#ec4500,#ee4e00,#ef5b00,#f06a00,#f07a00,#f08b00,#f09d00,#f0b000,#f0c302,#f0d410,#f0e135,#f1eb5b,#f4f280,#f6f6a1,#f8f8b6,#fafac7,#fbfbd5,#fcfcde,#fcfce2,#fcfce1,#fcfcdc,#fbfbd5,#fafaca,#f9f9c0,#f8f8b6,#f7f7ac,#f6f6a1,#f5f495,#f4f389,#f3f27f,#f3f177,#f3f073,#f2f071,#f2ef6f,#f2ef6f,#f2ef6f,#f2ef6f,#f2f070,#f2f071,#f2f072)"></i>
<i style="background:linear-gradient(90deg,#ec4400,#eb4100,#eb3e00,#ea3c00,#ea3a00,#ea3a00,#ea3c00,#eb3f00,#ec4500,#ee4e00,#ef5b00,#f06a00,#f07a00,#f08b00,#f09d00,#f0b000,#f0c302,#f0d410,#f0e135,#f1eb5b,#f3f27f,#f6f6a1,#f8f8b6,#fafac7,#fbfbd5,#fcfcde,#fcfce2,#fcfce1,#fcfcdc,#fbfbd4,#fafaca,#f9f9c0,#f8f8b6,#f7f7ac,#f6f6a1,#f5f494,#f4f389,#f3f17f,#f3f077,#f2f072,#f2f070,#f2ef6f,#f2ef6f,#f2ef6f,#f2ef6f,#f2f070,#f2f071,#f2f072)"></i>
<i style="background:linear-gradient(90deg,#ec4400,#eb4100,#eb3e00,#ea3c00,#ea3b00,#ea3b00,#ea3c00,#eb3f00,#ec4500,#ee4e00,#ef5b00,#f06a00,#f07a00,#f08b00,#f09d00,#f0b000,#f0c302,#f0d410,#f0e135,#f1eb5a,#f3f27f,#f6f6a0,#f8f8b6,#fafac6,#fbfbd4,#fcfcdd,#fcfce1,#fcfce0,#fcfcdb,#fbfbd4,#fafac9,#f9f9c0,#f8f8b6,#f7f7ab,#f6f6a1,#f5f494,#f4f388,#f3f17e,#f3f077,#f2f072,#f2f070,#f2ef6f,#f2ef6f,#f2ef6f,#f2ef6f,#f2f070,#f2f071,#f2f072)"></i>
<i style="background:linear-gradient(90deg,#ec4400,#eb4100,#eb3e00,#ea3c00,#ea3b00,#ea3b00,#ea3c00,#eb3f00,#ed4500,#ee4e00,#ef5b00,#f06a00,#f07a00,#f08b00,#f09d00,#f0b000,#f0c302,#f0d410,#f0e035,#f1ea5a,#f3f17e,#f6f6a0,#f8f8b5,#fafac6,#fbfbd4,#fcfcdd,#fcfce0,#fcfcdf,#fcfcdb,#fbfbd3,#fafac9,#f9f9bf,#f8f8b5,#f7f7ab,#f6f6a1,#f5f494,#f4f388,#f3f17e,#f3f077,#f2f072,#f2f070,#f2ef6f,#f2ef6e,#f2ef6e,#f2ef6f,#f2ef70,#f2f071,#f2f072)"></i>
<i style="background:linear-gradient(90deg,#ec4400,#eb4100,#eb3e00,#ea3c00,#ea3b00,#ea3b00,#ea3c00,#eb3f00,#ed4500,#ee4e00,#ef5b00,#f06a00,#f07a00,#f08b00,#f09d00,#f0b000,#f0c302,#f0d410,#f0e034,#f1ea59,#f3f17e,#f6f69f,#f8f8b5,#fafac5,#fbfbd3,#fcfcdc,#fcfce0,#fcfcdf,#fcfcda,#fbfbd2,#fafac8,#f9f9bf,#f8f8b5,#f7f7ab,#f6f6a0,#f5f494,#f4f388,#f3f17e,#f3f076,#f2f072,#f2f070,#f2ef6f,#f2ef6e,#f2ef6e,#f2ef6f,#f2ef6f,#f2f070,#f2f071)"></i>
<i style="background:linear-gradient(90deg,#ec4400,#eb4100,#eb3e00,#ea3c00,#ea3b00,#ea3b00,#ea3c00,#eb4000,#ed4500,#ee4e00,#ef5b00,#f06a00,#f07a00,#f08b00,#f09d00,#f0b000,#f0c202,#f0d410,#f0e034,#f1ea59,#f3f17d,#f6f69e,#f8f8b4,#fafac5,#fbfbd2,#fcfcdb,#fcfcdf,#fcfcde,#fcfcda,#fbfbd2,#fafac8,#f9f9bf,#f8f8b5,#f7f7aa,#f6f6a0,#f5f493,#f4f387,#f3f17e,#f3f076,#f2f072,#f2ef70,#f2ef6f,#f2ef6e,#f2ef6e,#f2ef6e,#f2ef6f,#f2f070,#f2f071)"></i>
<i style="background:linear-gradient(90deg,#ec4400,#eb4100,#eb3e00,#ea3c00,#ea3b00,#ea3b00,#ea3c00,#eb4000,#ed4500,#ee4e00,#ef5b00,#f06a00,#f07a00,#f08b00,#f09d00,#f0b000,#f0c202,#f0d310,#f0e033,#f1ea58,#f3f17c,#f6f69e,#f8f8b4,#fafac4,#fbfbd1,#fcfcda,#fcfcde,#fcfcdd,#fcfcd9,#fbfbd1,#fafac7,#f9f9be,#f8f8b4,#f7f7aa,#f6f6a0,#f5f493,#f4f387,#f3f17d,#f3f076,#f2f071,#f2ef6f,#f2ef6e,#f2ef6e,#f2ef6e,#f2ef6e,#f2ef6f,#f2f070,#f2f071)"></i>
<i style="background:linear-gradient(90deg,#ec4400,#eb4100,#eb3e00,#ea3c00,#ea3b00,#ea3b00,#ea3d00,#eb4000,#ed4500,#ee4e00,#ef5b00,#f06a00,#f07a00,#f08b00,#f09d00,#f0b000,#f0c202,#f0d30f,#f0e033,#f1ea58,#f3f17c,#f6f69d,#f8f8b3,#fafac3,#fbfbd1,#fcfcd9,#fcfcdd,#fcfcdd,#fbfbd8,#fbfbd0,#fafac7,#f9f9be,#f8f8b4,#f7f7aa,#f6f69f,#f5f492,#f4f387,#f3f17d,#f3f076,#f2f071,#f2ef6f,#f2ef6e,#f2ef6e,#f2ef6e,#f2ef6e,#f2ef6f,#f2ef70,#f2f071)"></i>
<i style="background:linear-gradient(90deg,#ec4400,#eb4100,#eb3f00,#ea3c00,#ea3b00,#ea3b00,#ea3d00,#eb4000,#ed4500,#ee4e00,#ef5b00,#f06a00,#f07a00,#f08b00,#f09d00,#f0af00,#f0c202,#f0d30f,#f0e033,#f1ea57,#f3f17b,#f6f69c,#f8f8b3,#f9f9c3,#fbfbd0,#fcfcd9,#fcfcdc,#fcfcdc,#fbfbd7,#fbfbd0,#fafac6,#f9f9bd,#f8f8b4,#f7f7a9,#f6f69f,#f5f492,#f4f387,#f3f17d,#f3f075,#f2f071,#f2ef6f,#f2ef6e,#f2ef6d,#f2ef6d,#f2ef6e,#f2ef6f,#f2ef6f,#f2f071)"></i>
<i style="background:linear-gradient(90deg,#ec4400,#ec4100,#eb3f00,#ea3d00,#ea3b00,#ea3b00,#ea3d00,#eb4000,#ed4500,#ee4e00,#ef5b00,#f06a00,#f07a00,#f08b00,#f09d00,#f0af00,#f0c202,#f0d30f,#f0e032,#f1ea57,#f3f17b,#f6f59c,#f8f8b2,#f9f9c2,#fbfbcf,#fbfbd8,#fcfcdc,#fcfcdb,#fbfbd7,#fbfbcf,#fafac6,#f9f9bd,#f8f8b3,#f7f7a9,#f6f69e,#f5f492,#f4f386,#f3f17c,#f3f075,#f2f071,#f2ef6f,#f2ef6e,#f2ef6d,#f2ef6d,#f2ef6e,#f2ef6e,#f2ef6f,#f2f070)"></i>
<svg width="564" height="316" viewBox="0 0 564 316"><g fill="none" stroke="#000" stroke-opacity=".52" stroke-width="1"><path d="M281.8,0.5 279.4,8.5 277.6,16.5 276.6,23.5 276.2,30.5 276.5,36.5 277.6,42.5 279.5,48 281.9,52.5 284.3,55.5 287.7,58.5 292.5,61.4 297.5,63.6 303.6,65.5 310.5,66.9 317.5,67.7 324.5,68 332.5,67.6 340.5,66.7 347.5,65.3 354.5,63.2 361.1,60.5 366.4,57.5 370.2,54.5 372.1,52.5 373.6,50.5 374.9,48.5 376.5,45.5 378.4,40.5 379.4,35.5 379.8,29.5 379.2,23.5 377.8,16.5 375.5,9.1 372.2,0.5M257.8,0.5 256,13.5 255.1,23.5 255,32.5 255.5,40.5 256.6,47.5 257.6,51.5 258.6,54.5 259.5,56.7 261,59.5 264.5,64.2 266.7,66.5 269.5,69 272.5,71.3 275.5,73.2 281.5,76.3 289.5,79.3 298.5,81.6 308.5,83.4 319.5,84.5 330.5,84.8 342.5,84.3 355.5,83 367.5,80.9 373.5,79.5 379.5,77.9 385.5,75.9 390.5,74.1 395.5,72 400.8,69.5 405.5,66.9 409.4,64.5 412.5,62.2 415.8,59.5 417.8,57.5 420.3,54.5 421.6,52.5 423.2,49.5 424.5,46.5 425.8,42.5 426.6,39.5 427.2,35.5 427.4,32.5 427.4,28.5 427.1,24.5 426.6,20.5 424.7,11.5 421.6,0.5M356.3,315.5 359.2,307.5 361.2,300.5 362.7,293.5 363.2,287.5 363.1,281.5 362.3,276.5 360.7,271.5 358.3,266.5 355.4,262.5 352.5,259.9 348.5,257.3 343.5,254.9 337.5,252.9 331.3,251.5 324.5,250.6 317.5,250.3 311.5,250.6 304.6,251.5 299.5,252.7 294.1,254.5 289.5,256.8 285.6,259.5 282.6,262.5 280.5,265.8 278.4,270.5 277,275.5 276.1,281.5 276,287.5 276.5,293.5 277.6,300.5 279.5,308.1 281.8,315.5M241.4,0.5 240.2,12.5 239.5,22.5 239.3,30.5 239.5,38.5 240.3,46.5 241.6,53.5 243.2,58.5 245.6,63.5 248.7,68.5 252.9,73.5 258.3,78.5 263.7,82.5 269.5,85.9 276.5,89.2 283.5,91.6 292.5,94 299.5,95.4 307.5,96.7 315.5,97.6 324.5,98.3 332.5,98.7 341.5,98.7 350.5,98.5 359.5,98 369.5,97.1 379.5,95.8 389.5,94.2 399.5,92.2 408.5,90.1 418.3,87.5 445.5,79.3 453.5,77.1 461.5,75.3 467.5,74.4 476.5,73.7 487.5,73.1 508.5,72.7 530.5,73 563.5,74.1M406.4,315.5 408.6,303.5 409.8,294.5 410.2,286.5 409.9,278.5 409.4,274.5 408.6,270.5 407.5,266.5 406.4,263.5 405,260.5 403.7,258.5 400.4,254.5 397.5,251.7 394.8,249.5 390.5,246.5 387.1,244.5 383.2,242.5 378.8,240.5 369.5,237 364.3,235.5 358.5,234.1 347.5,232 336.5,230.8 324.5,230.4 313.5,230.7 303.5,231.8 293.5,233.6 284.5,236.1 277.5,238.8 274.2,240.5 270.8,242.5 265.4,246.5 262.5,249.2 260.4,251.5 258.5,253.9 256.8,256.5 255.5,259 254.5,261.5 253.5,264.5 252.6,268.5 251.6,275.5 251.1,283.5 251.3,292.5 252.1,302.5 253.8,315.5M227.4,0.5 226.3,14.5 225.8,24.5 225.8,33.5 226.2,42.5 227.1,50.5 228.2,56.5 230.1,62.5 232.4,67.5 235.9,73.5 239.7,78.5 244.5,83.7 250.5,88.9 257.1,93.5 264.3,97.5 271.5,100.8 279.5,103.6 287.5,105.7 295.5,107.5 304.5,109.1 314.5,110.4 324.5,111.5 334.5,112.2 345.5,112.7 356.5,112.8 375.5,112.5 394.5,111.3 412.5,109.7 447.5,105.7 462.5,104.6 469.5,104.4 563.5,104.4M563.5,253.5 532.5,258.1 519.5,259.6 513.5,259.9 507.5,260 501.5,259.7 495.5,259 489.5,258.1 483.5,256.9 475.5,254.9 467.5,252.7 463.5,251 459.5,249.1 441.7,239.5 433.8,235.5 427.5,232.5 420.5,229.5 412.5,226.4 403.5,223.5 394.5,221 385.5,218.9 374.5,216.9 363.5,215.5 352.5,214.5 340.5,214 328.5,214.1 317.5,214.7 306.5,215.8 295.5,217.5 285.5,219.8 277.5,222.1 269.5,225.4 262.5,229 255.7,233.5 249.8,238.5 245.1,243.5 242.8,246.5 240.8,249.5 238.2,254.5 236.9,257.5 236,260.5 234.7,266.5 233.7,274.5 233.3,283.5 233.4,292.5 234,302.5 235.2,315.5M214.6,0.5 213.7,15.5 213.3,26.5 213.4,37.5 213.9,46.5 214.9,54.5 216.1,60.5 218.1,66.5 220.7,72.5 224.5,79.3 228.9,85.5 234.3,91.5 239.8,96.5 246.5,101.6 253.5,106 261.5,110.2 269.5,113.6 277.5,116.3 285.5,118.5 296.5,121 308.5,123.3 321.5,125.3 335.5,127 350.5,128.6 366.5,129.9 391.5,131.3 448.5,133.6 479.5,135.4 494.5,136 508.5,136.2 523.5,136.1 563.5,134.8M563.5,201.2 509.5,200.8 462.5,201.2 449.5,200.5 418.5,197.6 400.5,196.3 381.5,195.6 362.5,195.6 349.5,196.1 337.5,196.8 325.5,197.9 314.5,199.2 303.5,200.9 293.5,202.8 283.5,205.1 275.5,207.4 266.5,210.8 258.8,214.5 251.5,218.7 244.7,223.5 238.5,228.8 233.1,234.5 228.6,240.5 225,246.5 222.3,252.5 220.4,258.5 219.4,263.5 218.5,271.5 218,280.5 218,290.5 218.4,301.5 219.4,315.5M202.4,0.5 201.5,21.5 201.5,37.5 201.8,45.5 202.4,52.5 202.9,56.5 203.8,61.5 205.1,66.5 206.7,71.5 208.7,76.5 211.1,81.5 213.5,85.8 216.6,90.5 220.4,95.5 223.8,99.5 227.5,103.2 231.1,106.5 235.5,110.1 239.5,113 248.5,118.8 254.5,122.1 259.5,124.5 269.5,128.8 279.5,132.4 291.5,136 321.7,144.5 331.3,147.5 337,149.5 344.1,152.5 349.1,155.5 351.3,157.5 352,158.5 352.6,160.5 352.6,161.5 352.3,162.5 351.8,163.5 350,165.5 348.7,166.5 345.5,168.5 339,171.5 333.5,173.5 324.1,176.5 293.5,185 280.5,188.9 270.5,192.4 260.5,196.7 250.5,201.9 245.5,204.9 240.5,208.2 232.5,214.4 229,217.5 225.5,221 221.5,225.5 218.5,229.3 215.6,233.5 213.3,237.5 211.2,241.5 209,246.5 207.3,251.5 206,256.5 205,261.5 204.5,266.5 204,273.5 203.7,280.5 203.8,295.5 204.8,315.5M190.5,0.5 189.9,19.5 189.8,33.5 190.1,46.5 190.9,56.5 192.3,65.5 194.5,74.4 197.3,82.5 200.9,90.5 204.5,97 208.9,103.5 213.7,109.5 219.3,115.5 225.5,121.3 233.5,127.8 240.5,132.9 257.3,144.5 263.6,149.5 266.7,152.5 268.2,154.5 269.7,157.5 270.1,159.5 269.9,161.5 268.8,164.5 266.6,167.5 263.7,170.5 260.1,173.5 256.2,176.5 239.5,188.2 231.5,194.2 224.5,200 217.6,206.5 212.1,212.5 207.5,218.4 203.5,224.4 200.1,230.5 196.9,237.5 194.1,245.5 192.1,253.5 190.9,261.5 190.1,272.5 189.8,284.5 190,297.5 190.7,315.5M178.6,0.5 178.1,32.5 178.3,44.5 178.8,55.5 179.6,63.5 180.7,71.5 182.4,79.5 184.3,86.5 186.3,92.5 188.6,98.5 191.3,104.5 194.5,110.5 198.2,116.5 202.5,122.7 207.5,129.2 217.6,141.5 221.9,147.5 223.7,150.5 225,153.5 225.8,156.5 226.1,159.5 225.8,162.5 224.9,165.5 223.6,168.5 221.2,172.5 216.7,178.5 206.5,190.6 201.5,196.8 196.6,203.5 192.8,209.5 189.5,215.4 187,220.5 184.5,226.5 182.4,232.5 180.3,239.5 178.6,247.5 177.5,254.5 176.7,262.5 176.2,272.5 176,284.5 176.1,297.5 176.6,315.5M166.4,0.5 166.2,31.5 166.5,54.5 167.4,69.5 169.1,84.5 171.1,96.5 174,108.5 175.8,114.5 178.1,121.5 185.1,139.5 187.2,145.5 188.3,149.5 188.9,152.5 189.3,155.5 189.4,158.5 189.2,161.5 188.7,164.5 188,167.5 186.7,171.5 184.3,177.5 175.5,197 172.9,203.5 170.8,209.5 167.7,220.5 165.2,232.5 164.1,239.5 163.2,247.5 162.1,262.5 161.8,284.5 162.1,315.5M153.6,0.5 153.6,88.5 153.2,118.5 152.9,130.5 152.2,141.5 151.3,152.5 148.4,182.5 147.7,192.5 147.2,204.5 146.8,220.5 146.6,242.5 146.5,315.5M139.6,0.5 139.9,22.5 139.9,39.5 139.6,53.5 138.9,64.5 137.5,76.5 135.8,86.5 133.5,96.2 130.8,104.5 127.9,111.5 124.5,118.1 120.5,124.3 115.5,130.7 109.5,137 103.5,142.2 98.5,146.1 87.8,153.5 83.9,156.5 81.9,158.5 80.5,160.5 80,161.5 79.5,163.5 79.6,164.5 80.2,166.5 81.5,168.5 83.1,170.5 86.2,173.5 95.5,181.5 99.5,185.3 104.5,190.7 108.5,195.8 112.5,201.9 115.6,207.5 118.9,214.5 121.5,221.7 123.8,229.5 125.5,237.5 127,246.5 128,256.5 128.4,265.5 128.7,280.5 128.4,315.5M0.5,180 6,177.5 12.1,174.5 15.7,172.5 18.9,170.5 21.4,168.5 23.2,166.5 24.1,164.5 24.2,163.5 24,162.5 22.9,160.5 20.7,158.5 17.6,156.5 11.3,153.5 0.5,149.4M123.1,0.5 123.8,22.5 123.8,38.5 123.5,46.5 123,53.5 122.4,58.5 121.5,63.7 120.1,69.5 118.6,74.5 116.6,79.5 114.5,84 111.9,88.5 109,92.5 105.6,96.5 102.5,99.4 99.5,101.7 95.5,104.2 90.5,106.6 85.5,108.5 80.5,110 74.5,111.4 68.5,112.3 61.5,112.9 55.5,113.1 48.5,113 41.5,112.6 34.5,111.8 26.5,110.7 18.5,109.2 0.5,105.1M0.5,242 6.5,238.8 12.5,235.9 18.5,233.5 24.5,231.3 30.5,229.6 36.5,228.2 42.5,227.2 48.5,226.5 54.5,226.3 59.5,226.5 64.5,227 69.5,228 74.5,229.4 78.5,231 82.5,233 86.5,235.5 89.5,237.8 92.3,240.5 94.5,242.9 96.5,245.7 98.5,249.2 100,252.5 101.3,256.5 102.3,260.5 102.9,264.5 103.5,270.5 104,283.5 103.8,297.5 102.8,315.5M98.9,0.5 100.5,15.5 101.1,28.5 100.8,39.5 100.3,44.5 99.5,49.8 98.7,53.5 97.5,57 96.4,59.5 94.5,62.7 92.4,65.5 89.5,68.5 87.2,70.5 84.4,72.5 80.5,74.7 76.5,76.5 72.5,77.9 67.5,79.1 62.5,79.9 56.5,80.3 51.5,80.3 45.5,79.8 39.5,79 33.5,77.8 28.4,76.5 22.2,74.5 16.5,72.3 10.4,69.5 4.8,66.5 0.5,63.8"/></g><path d="M188.5 0v316M376.5 0v316M0 105.5h564M0 211.5h564" stroke="#c4c4c4" stroke-width="1" fill="none"/>
<g font-family="Liberation Mono" font-weight="700" font-size="16.7" text-anchor="middle">
<text x="83.3 92.9 102.5" y="46" fill="#8d9b9b">6.1</text>
<text x="272.0 281.6 291.2" y="46" fill="#76768a"><tspan font-family="Liberation Sans" font-size="16">0</tspan>.<tspan font-family="Liberation Sans" font-size="16">0</tspan></text>
<text x="460.7 470.3 479.9" y="46" fill="#777389"><tspan font-family="Liberation Sans" font-size="16">0</tspan>.8</text>
<text x="83.3 92.9 102.5" y="152" fill="#8a8f8f">5.<tspan font-family="Liberation Sans" font-size="16">0</tspan></text>
<text x="272.0 281.6 291.2" y="152" fill="#7b7a8c">2.9</text>
<text x="460.7 470.3 479.9" y="152" fill="#79758b">2.2</text>
<text x="83.3 92.9 102.5" y="258" fill="#8c9696">5.6</text>
<text x="272.0 281.6 291.2" y="258" fill="#75738a"><tspan font-family="Liberation Sans" font-size="16">0</tspan>.5</text>
<text x="460.7 470.3 479.9" y="258" fill="#77738a">1.5</text>
</g>
<g font-family="Liberation Sans" font-weight="700" font-size="16.5" fill="#fff"><text x="422" y="305.5" textLength="76.5" lengthAdjust="spacingAndGlyphs">datacolor</text></g><rect x="501" y="297" width="54" height="10" fill="#ec2c33"/><rect x="422" y="309" width="133" height="1" fill="#fff"/></svg>
</div>
<span class="t" style="left:337.5px;top:741.5px;font-size:15px">DeltaE To Closest</span>
<div id="bar"></div>
<div class="tk" style="left:114px"></div><span class="tl" style="left:94.2px">0.0</span>
<div class="tk" style="left:142px"></div><span class="tl" style="left:122.4px">0.5</span>
<div class="tk" style="left:170px"></div><span class="tl" style="left:150.6px">1.0</span>
<div class="tk" style="left:198px"></div><span class="tl" style="left:178.9px">1.5</span>
<div class="tk" style="left:227px"></div><span class="tl" style="left:207.1px">2.0</span>
<div class="tk" style="left:255px"></div><span class="tl" style="left:235.3px">2.5</span>
<div class="tk" style="left:283px"></div><span class="tl" style="left:263.5px">3.0</span>
<div class="tk" style="left:311px"></div><span class="tl" style="left:291.7px">3.5</span>
<div class="tk" style="left:339px"></div><span class="tl" style="left:320.0px">4.0</span>
<div class="tk" style="left:368px"></div><span class="tl" style="left:348.2px">4.5</span>
<div class="tk" style="left:396px"></div><span class="tl" style="left:376.4px">5.0</span>
<div class="tk" style="left:424px"></div><span class="tl" style="left:404.6px">5.5</span>
<div class="tk" style="left:452px"></div><span class="tl" style="left:432.8px">6.0</span>
<div class="tk" style="left:481px"></div><span class="tl" style="left:461.1px">6.5</span>
<div class="tk" style="left:509px"></div><span class="tl" style="left:489.3px">7.0</span>
<div class="tk" style="left:537px"></div><span class="tl" style="left:517.5px">7.5</span>
<div class="tk" style="left:565px"></div><span class="tl" style="left:545.7px">8.0</span>
<div class="tk" style="left:593px"></div><span class="tl" style="left:573.9px">8.5</span>
<div class="tk" style="left:622px"></div><span class="tl" style="left:602.2px">9.0</span>
<div class="tk" style="left:650px"></div><span class="tl" style="left:630.4px">9.5</span>
<div class="tk" style="left:678px"></div><span class="tl" style="left:658.6px">10.0</span>
<span class="t" style="left:62.5px;top:901px;color:#9b9b9b;letter-spacing:-.3px">Display Name:</span>
<span class="t" style="left:141.5px;top:901px;color:#b4b4b4;font-weight:700;letter-spacing:-.33px">ASUS ROG SWIFT PG248Q-1</span>
<div class="btn" style="left:770px">Print</div><div class="btn" style="left:880px">Close</div>
<div style="left:0;top:0;width:1001px;height:941px;border:1px solid #3398fc;pointer-events:none"></div>
</body></html>
